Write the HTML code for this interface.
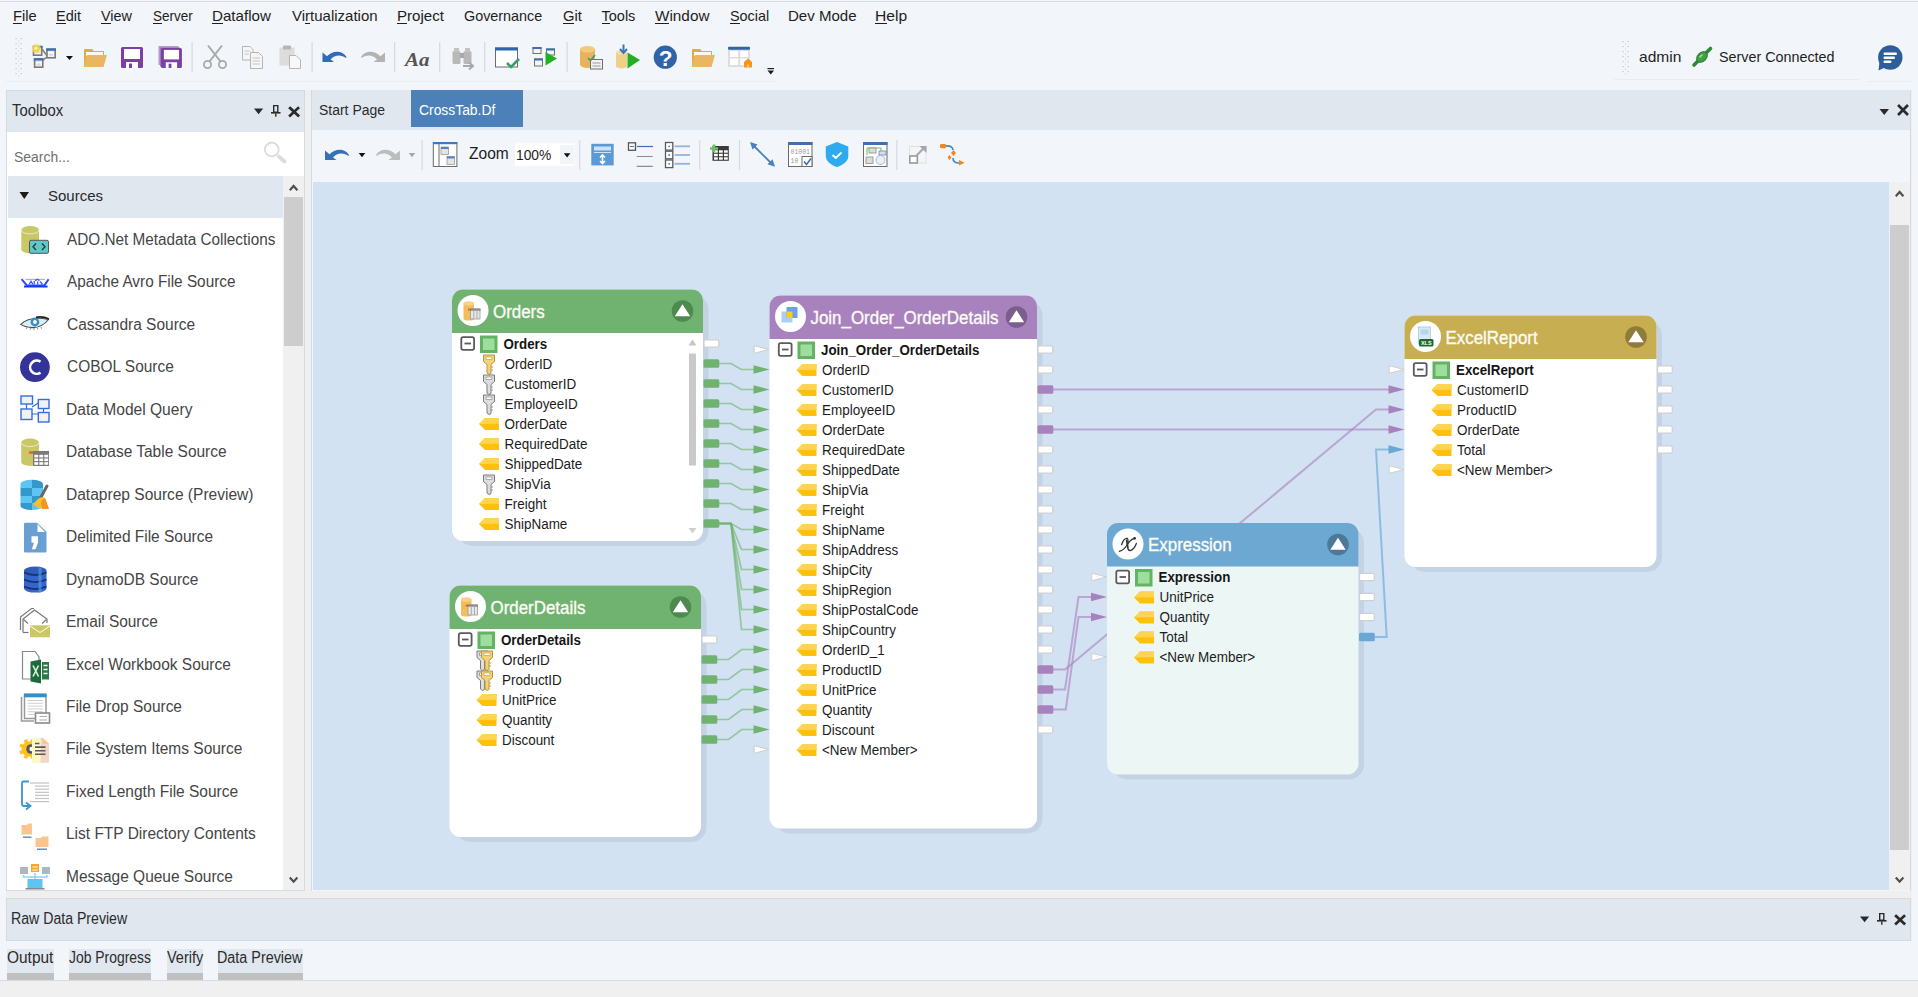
<!DOCTYPE html>
<html><head><meta charset="utf-8"><title>CrossTab.Df</title>
<style>
html,body{margin:0;padding:0}
body{width:1918px;height:997px;position:relative;overflow:hidden;background:#f2f5f9;font-family:"Liberation Sans",sans-serif}
.a{position:absolute}
.t{position:absolute;white-space:pre;transform-origin:0 0;font-family:"Liberation Sans",sans-serif}
svg.a{overflow:visible}
</style></head><body>
<div class="a" style="left:0px;top:1px;width:1918px;height:1px;background:#d9d9d9;"></div><span class="t" style="left:13.39px;top:8.72px;font-size:14.5px;line-height:14.5px;color:#1e1e1e;transform:scaleX(1.0135);">File</span><div class="a" style="left:13.4px;top:23px;width:9.0px;height:1px;background:#1e1e1e"></div><span class="t" style="left:56.00px;top:8.72px;font-size:14.5px;line-height:14.5px;color:#1e1e1e;">Edit</span><div class="a" style="left:56.0px;top:23px;width:9.7px;height:1px;background:#1e1e1e"></div><span class="t" style="left:101.00px;top:8.72px;font-size:14.5px;line-height:14.5px;color:#1e1e1e;transform:scaleX(0.9938);">View</span><div class="a" style="left:101.0px;top:23px;width:9.6px;height:1px;background:#1e1e1e"></div><span class="t" style="left:152.50px;top:8.72px;font-size:14.5px;line-height:14.5px;color:#1e1e1e;transform:scaleX(0.9329);">Server</span><div class="a" style="left:152.5px;top:23px;width:9.0px;height:1px;background:#1e1e1e"></div><span class="t" style="left:211.86px;top:8.72px;font-size:14.5px;line-height:14.5px;color:#1e1e1e;transform:scaleX(1.0439);">Dataflow</span><div class="a" style="left:211.9px;top:23px;width:10.9px;height:1px;background:#1e1e1e"></div><span class="t" style="left:291.50px;top:8.72px;font-size:14.5px;line-height:14.5px;color:#1e1e1e;transform:scaleX(1.0340);">Virtualization</span><div class="a" style="left:304.6px;top:23px;width:5.0px;height:1px;background:#1e1e1e"></div><span class="t" style="left:396.66px;top:8.72px;font-size:14.5px;line-height:14.5px;color:#1e1e1e;transform:scaleX(1.0408);">Project</span><div class="a" style="left:396.7px;top:23px;width:10.1px;height:1px;background:#1e1e1e"></div><span class="t" style="left:464.40px;top:8.72px;font-size:14.5px;line-height:14.5px;color:#1e1e1e;transform:scaleX(0.9908);">Governance</span><span class="t" style="left:562.90px;top:8.72px;font-size:14.5px;line-height:14.5px;color:#1e1e1e;transform:scaleX(1.0162);">Git</span><div class="a" style="left:562.9px;top:23px;width:11.5px;height:1px;background:#1e1e1e"></div><span class="t" style="left:601.50px;top:8.72px;font-size:14.5px;line-height:14.5px;color:#1e1e1e;">Tools</span><div class="a" style="left:601.5px;top:23px;width:8.8px;height:1px;background:#1e1e1e"></div><span class="t" style="left:655.00px;top:8.72px;font-size:14.5px;line-height:14.5px;color:#1e1e1e;transform:scaleX(1.0557);">Window</span><div class="a" style="left:655.0px;top:23px;width:14.4px;height:1px;background:#1e1e1e"></div><span class="t" style="left:730.00px;top:8.72px;font-size:14.5px;line-height:14.5px;color:#1e1e1e;transform:scaleX(0.9931);">Social</span><div class="a" style="left:730.0px;top:23px;width:9.6px;height:1px;background:#1e1e1e"></div><span class="t" style="left:787.96px;top:8.72px;font-size:14.5px;line-height:14.5px;color:#1e1e1e;transform:scaleX(1.0381);">Dev Mode</span><span class="t" style="left:875.42px;top:8.72px;font-size:14.5px;line-height:14.5px;color:#1e1e1e;transform:scaleX(1.0780);">Help</span><div class="a" style="left:875.4px;top:23px;width:11.3px;height:1px;background:#1e1e1e"></div><svg class="a" style="left:0px;top:35px" width="800" height="50" viewBox="0 35 800 50"><rect x="33.5" y="46.6" width="8.2" height="8.6" fill="#ececec" stroke="#7a7a7a" stroke-width="1.6"/><rect x="35.0" y="49.6" width="5.199999999999999" height="4.1" fill="#fff"/><rect x="35.5" y="51.1" width="4.199999999999999" height="2" fill="#d8d8d8"/><rect x="32.7" y="45.800000000000004" width="9.799999999999999" height="2.4" fill="#3f6fb3"/><rect x="47" y="49.2" width="8.2" height="8.6" fill="#ececec" stroke="#7a7a7a" stroke-width="1.6"/><rect x="48.5" y="52.2" width="5.199999999999999" height="4.1" fill="#fff"/><rect x="49" y="53.7" width="4.199999999999999" height="2" fill="#d8d8d8"/><rect x="46.2" y="48.400000000000006" width="9.799999999999999" height="2.4" fill="#3f6fb3"/><rect x="34.6" y="59" width="8.2" height="8.2" fill="#ececec" stroke="#7a7a7a" stroke-width="1.6"/><rect x="36.1" y="62" width="5.199999999999999" height="3.6999999999999993" fill="#fff"/><rect x="36.6" y="63.5" width="4.199999999999999" height="2" fill="#d8d8d8"/><rect x="33.800000000000004" y="58.2" width="9.799999999999999" height="2.4" fill="#3f6fb3"/><path d="M42 49 L46.8 55.5 M43.5 60 Q45 57.5 47 57.8" fill="none" stroke="#808080" stroke-width="1.6"/><circle cx="36.3" cy="48.6" r="4.8" fill="#f7e27a" opacity="0.6"/><circle cx="36.3" cy="48.6" r="3.4" fill="#f3d03c"/><circle cx="36" cy="48.3" r="1.6" fill="#fbeea8"/><path d="M66 56 L73 56 L69.5 60 Z" fill="#111"/><path d="M84 50 Q84 49 85 49 H92 L94 51 H104 V66 H84 Z" fill="#e2a94c"/><path d="M86 52 H103 V56 H86 Z" fill="#fff7e6"/><path d="M87 55 H107 L103.5 67 H83.5 Z" fill="#ebb660"/><rect x="121" y="47" width="22.0" height="21.0" rx="1.5" fill="#7b3fa6"/><rect x="124.0" y="49.0" width="16.0" height="10.0" fill="#fff"/><rect x="126.0" y="62.0" width="12.0" height="6.0" fill="#fff"/><rect x="129.0" y="63.5" width="3.0" height="4.5" fill="#7b3fa6"/><rect x="158.5" y="46" width="20" height="19" fill="#b39ccc"/><rect x="160" y="47.5" width="20" height="19" fill="#9a7bbd"/><rect x="161" y="48" width="20.9" height="19.95" rx="1.5" fill="#7b3fa6"/><rect x="163.85" y="49.9" width="15.2" height="9.5" fill="#fff"/><rect x="165.75" y="62.25" width="11.399999999999999" height="5.699999999999999" fill="#fff"/><rect x="168.6" y="63.675" width="2.8499999999999996" height="4.2749999999999995" fill="#7b3fa6"/><rect x="191.5" y="42" width="1.2" height="30" fill="#d5dae0"/><circle cx="207.5" cy="64.5" r="3.6" fill="none" stroke="#a9a9a9" stroke-width="1.8"/><circle cx="222.5" cy="64.5" r="3.6" fill="none" stroke="#a9a9a9" stroke-width="1.8"/><path d="M209.5 61.5 L222 45.5 M220.5 61.5 L208 45.5" stroke="#a9a9a9" stroke-width="2"/><path d="M242.5 46.5 H250 L253 49.5 V60 H242.5 Z" fill="#f6f6f6" stroke="#b5b5b5"/><path d="M250.5 52.5 H258.5 L262.5 56.5 V68.5 H250.5 Z" fill="#f6f6f6" stroke="#b5b5b5"/><path d="M252.5 58 H260 M252.5 61 H260 M252.5 64 H260 M244.5 51 H250 M244.5 54 H249" stroke="#c4c4c4" stroke-width="1"/><rect x="279.5" y="47.5" width="15" height="18" fill="#dcdcdc"/><rect x="283" y="45.5" width="8" height="4" rx="1" fill="#b5b5b5"/><path d="M289.5 55.5 H296 L300.5 60 V68.5 H289.5 Z" fill="#f8f8f8" stroke="#b5b5b5"/><rect x="311.5" y="42" width="1.2" height="30" fill="#d5dae0"/><path transform="translate(322.5,48)" d="M0 14 L0 4.5 L4.5 8.3 C9 3.5 19 1 24 9 L23.5 10 C19 6.5 12 6.5 8 11.5 L11.5 14 Z" fill="#2f6db5"/><path transform="translate(385,48) scale(-1,1)" d="M0 14 L0 4.5 L4.5 8.3 C9 3.5 19 1 24 9 L23.5 10 C19 6.5 12 6.5 8 11.5 L11.5 14 Z" fill="#b3b3b3"/><rect x="394.0" y="42" width="1.2" height="30" fill="#d5dae0"/><text x="405" y="66" font-family="Liberation Serif" font-style="italic" font-weight="700" font-size="19" fill="#555" textLength="24.5" lengthAdjust="spacingAndGlyphs">Aa</text><rect x="439.1" y="42" width="1.2" height="30" fill="#d5dae0"/><rect x="452.5" y="51" width="8" height="13" rx="1.5" fill="#b8b8b8"/><rect x="463.5" y="51" width="8" height="13" rx="1.5" fill="#b8b8b8"/><rect x="454" y="48" width="5" height="4" fill="#c2c2c2"/><rect x="465" y="48" width="5" height="4" fill="#c2c2c2"/><rect x="460" y="53" width="4" height="5" fill="#a8a8a8"/><path d="M463 66 H472.5 M469 62.5 L473 66 L469 69.5" fill="none" stroke="#a8a8a8" stroke-width="2"/><rect x="484.1" y="42" width="1.2" height="30" fill="#d5dae0"/><rect x="495.5" y="48" width="22" height="19" fill="#fff" stroke="#6b6b6b" stroke-width="1"/><rect x="495" y="47.5" width="23" height="3" fill="#2f64a8"/><path d="M507 63 L511 67 L519 59" fill="none" stroke="#3a9a6e" stroke-width="2.6"/><rect x="533.0" y="47.5" width="8" height="6" fill="#f4f4f4" stroke="#707070" stroke-width="1"/><rect x="532.5" y="47" width="9" height="2" fill="#3d6eb5"/><rect x="546.5" y="49.0" width="8" height="6" fill="#f4f4f4" stroke="#707070" stroke-width="1"/><rect x="546" y="48.5" width="9" height="2" fill="#3d6eb5"/><rect x="534.5" y="59.0" width="8" height="7" fill="#f4f4f4" stroke="#707070" stroke-width="1"/><rect x="534" y="58.5" width="9" height="2" fill="#3d6eb5"/><path d="M545.5 52 L557 58.5 L545.5 65.5 Z" fill="#22b022"/><rect x="566.5" y="42" width="1.2" height="30" fill="#d5dae0"/><path d="M580 49.3 V64.7 A7.5 3.3 0 0 0 595 64.7 V49.3 Z" fill="#e8b35e"/><ellipse cx="587.5" cy="49.3" rx="7.5" ry="3.3" fill="#f3c97a"/><rect x="590.5" y="59.5" width="12" height="9.5" fill="#f2f2f2" stroke="#6f6f6f"/><path d="M592.5 63 H600.5 M592.5 66 H600.5" stroke="#9a9a9a"/><path d="M588 58 L590.5 60.5 L595 55" fill="none" stroke="#3a9a6e" stroke-width="1.6"/><path d="M616 52.42 V66.08 A5.5 2.42 0 0 0 627 66.08 V52.42 Z" fill="#f0cf86"/><ellipse cx="621.5" cy="52.42" rx="5.5" ry="2.42" fill="#f7dca0"/><path d="M623.5 44.5 V52" stroke="#3d74b8" stroke-width="2"/><path d="M620 49 L623.5 53 L627 49" fill="none" stroke="#3d74b8" stroke-width="2"/><path d="M627.5 52.5 L640 60 L627.5 68.5 Z" fill="#22b022"/><circle cx="665.3" cy="57.2" r="11.6" fill="#2f64a8"/><text x="665.6" y="66.3" text-anchor="middle" font-family="Liberation Sans" font-weight="700" font-size="22.5" fill="#fff">?</text><path d="M692 50 Q692 49 693 49 H700 L702 51 H712 V66 H692 Z" fill="#e2a94c"/><path d="M694 52 H711 V56 H694 Z" fill="#fff7e6"/><path d="M695 55 H715 L711.5 67 H691.5 Z" fill="#ebb660"/><rect x="728" y="47" width="22" height="20" fill="#dedede"/><rect x="728" y="46.8" width="22" height="3" rx="1" fill="#2f64a8"/><rect x="730" y="51" width="8.2" height="6" fill="#fff"/><rect x="740.2" y="51" width="8" height="6" fill="#fff"/><rect x="730" y="58.5" width="8.2" height="6.5" fill="#fff"/><rect x="740.2" y="58.5" width="8" height="6.5" fill="#fff"/><path d="M744 62 L748 58.5 L752 62 V67.5 H744 Z" fill="#f7941d"/><rect x="747" y="64.5" width="2" height="3" fill="#fbc27a"/><rect x="767.5" y="68" width="6.5" height="1.2" fill="#1a1a1a"/><path d="M767.5 70.5 H774 L770.75 74.5 Z" fill="#1a1a1a"/></svg><div class="a" style="left:6px;top:81px;width:770px;height:1px;background:#eaecee;"></div><div class="a" style="left:1614px;top:79px;width:245px;height:1px;background:#eaecee;"></div><div class="a" style="left:1868px;top:81px;width:44px;height:1px;background:#eaecee;"></div><svg class="a" style="left:14px;top:37px" width="9" height="39" viewBox="14 37 9 39"><rect x="15.5" y="38" width="1.2" height="1.2" fill="#c4c8cc"/><rect x="20.5" y="38" width="1.2" height="1.2" fill="#c4c8cc"/><rect x="18" y="40.5" width="1.2" height="1.2" fill="#d4d8dc"/><rect x="15.5" y="43" width="1.2" height="1.2" fill="#c4c8cc"/><rect x="20.5" y="43" width="1.2" height="1.2" fill="#c4c8cc"/><rect x="18" y="45.5" width="1.2" height="1.2" fill="#d4d8dc"/><rect x="15.5" y="48" width="1.2" height="1.2" fill="#c4c8cc"/><rect x="20.5" y="48" width="1.2" height="1.2" fill="#c4c8cc"/><rect x="18" y="50.5" width="1.2" height="1.2" fill="#d4d8dc"/><rect x="15.5" y="53" width="1.2" height="1.2" fill="#c4c8cc"/><rect x="20.5" y="53" width="1.2" height="1.2" fill="#c4c8cc"/><rect x="18" y="55.5" width="1.2" height="1.2" fill="#d4d8dc"/><rect x="15.5" y="58" width="1.2" height="1.2" fill="#c4c8cc"/><rect x="20.5" y="58" width="1.2" height="1.2" fill="#c4c8cc"/><rect x="18" y="60.5" width="1.2" height="1.2" fill="#d4d8dc"/><rect x="15.5" y="63" width="1.2" height="1.2" fill="#c4c8cc"/><rect x="20.5" y="63" width="1.2" height="1.2" fill="#c4c8cc"/><rect x="18" y="65.5" width="1.2" height="1.2" fill="#d4d8dc"/><rect x="15.5" y="68" width="1.2" height="1.2" fill="#c4c8cc"/><rect x="20.5" y="68" width="1.2" height="1.2" fill="#c4c8cc"/><rect x="18" y="70.5" width="1.2" height="1.2" fill="#d4d8dc"/><rect x="15.5" y="73" width="1.2" height="1.2" fill="#c4c8cc"/><rect x="20.5" y="73" width="1.2" height="1.2" fill="#c4c8cc"/><rect x="18" y="75.5" width="1.2" height="1.2" fill="#d4d8dc"/></svg><svg class="a" style="left:1621px;top:40px" width="9" height="34" viewBox="1621 40 9 34"><rect x="1622.5" y="41" width="1.2" height="1.2" fill="#c4c8cc"/><rect x="1627.5" y="41" width="1.2" height="1.2" fill="#c4c8cc"/><rect x="1625" y="43.5" width="1.2" height="1.2" fill="#d4d8dc"/><rect x="1622.5" y="46" width="1.2" height="1.2" fill="#c4c8cc"/><rect x="1627.5" y="46" width="1.2" height="1.2" fill="#c4c8cc"/><rect x="1625" y="48.5" width="1.2" height="1.2" fill="#d4d8dc"/><rect x="1622.5" y="51" width="1.2" height="1.2" fill="#c4c8cc"/><rect x="1627.5" y="51" width="1.2" height="1.2" fill="#c4c8cc"/><rect x="1625" y="53.5" width="1.2" height="1.2" fill="#d4d8dc"/><rect x="1622.5" y="56" width="1.2" height="1.2" fill="#c4c8cc"/><rect x="1627.5" y="56" width="1.2" height="1.2" fill="#c4c8cc"/><rect x="1625" y="58.5" width="1.2" height="1.2" fill="#d4d8dc"/><rect x="1622.5" y="61" width="1.2" height="1.2" fill="#c4c8cc"/><rect x="1627.5" y="61" width="1.2" height="1.2" fill="#c4c8cc"/><rect x="1625" y="63.5" width="1.2" height="1.2" fill="#d4d8dc"/><rect x="1622.5" y="66" width="1.2" height="1.2" fill="#c4c8cc"/><rect x="1627.5" y="66" width="1.2" height="1.2" fill="#c4c8cc"/><rect x="1625" y="68.5" width="1.2" height="1.2" fill="#d4d8dc"/><rect x="1622.5" y="71" width="1.2" height="1.2" fill="#c4c8cc"/><rect x="1627.5" y="71" width="1.2" height="1.2" fill="#c4c8cc"/><rect x="1625" y="73.5" width="1.2" height="1.2" fill="#d4d8dc"/></svg><span class="t" style="left:1639.00px;top:49.10px;font-size:15px;line-height:15px;color:#1e1e1e;transform:scaleX(1.0367);">admin</span><svg class="a" style="left:1690px;top:45px" width="25" height="25" viewBox="1690 45 25 25"><path d="M1694 65 L1699.5 59.5" stroke="#2e8b34" stroke-width="3.6" stroke-linecap="round"/><path d="M1704.5 54.5 L1710.5 48.5" stroke="#2e8b34" stroke-width="3.6" stroke-linecap="round"/><ellipse cx="1702" cy="57" rx="6.2" ry="4.3" transform="rotate(-45 1702 57)" fill="#43a047" stroke="#2a7a2e" stroke-width="1"/><path d="M1699.5 57.5 L1702.5 54.5" stroke="#9be09b" stroke-width="1.5"/></svg><span class="t" style="left:1719.40px;top:49.10px;font-size:15px;line-height:15px;color:#1e1e1e;transform:scaleX(0.9556);">Server Connected</span><svg class="a" style="left:1877px;top:45px" width="28" height="28" viewBox="1877 45 28 28"><circle cx="1890.3" cy="57.5" r="12.2" fill="#2d5e99"/><path d="M1879.5 62 L1878.5 70.5 L1886 67" fill="#2d5e99"/><rect x="1883.5" y="52.5" width="13.5" height="2.4" rx="1.2" fill="#fff"/><rect x="1883.5" y="56.5" width="11.5" height="2.4" rx="1.2" fill="#fff"/><rect x="1883.5" y="60.5" width="8" height="2.4" rx="1.2" fill="#fff"/></svg><div class="a" style="left:6px;top:90px;width:1906px;height:851px;background:#efefef;"></div><div class="a" style="left:6px;top:90px;width:299px;height:801px;background:#ffffff;box-sizing:border-box;border:1px solid #d3dae2"></div><div class="a" style="left:7px;top:91px;width:297px;height:41px;background:#e0e7ef;"></div><span class="t" style="left:11.70px;top:102.82px;font-size:15.8px;line-height:15.8px;color:#2b2b2b;transform:scaleX(0.9404);">Toolbox</span><svg class="a" style="left:252px;top:102.5px" width="52" height="16" viewBox="252 102.5 52 16"><path d="M254 108.0 L263.2 108.0 L258.6 113.8 Z" fill="#2a2a2a"/><path d="M273 104.5 H278.5 V112.0 H273 Z M274.4 105.8 V111.0 H277.1 V105.8 Z" fill="#2a2a2a" fill-rule="evenodd"/><rect x="271" y="111.5" width="9.5" height="1.6" fill="#2a2a2a"/><rect x="275.1" y="113.0" width="1.4" height="3.2" fill="#2a2a2a"/><path d="M290.1 107.6 L298.1 115.1 M298.1 107.6 L290.1 115.1" stroke="#2a2a2a" stroke-width="2.7" stroke-linecap="square"/></svg><span class="t" style="left:13.70px;top:150.17px;font-size:14.8px;line-height:14.8px;color:#707070;transform:scaleX(0.9414);">Search...</span><svg class="a" style="left:262px;top:141px" width="26" height="26" viewBox="262 141 26 26"><circle cx="271.8" cy="149.5" r="6.9" fill="none" stroke="#dadada" stroke-width="1.7"/><path d="M268.2 146.8 Q269 145.3 270.8 144.9" fill="none" stroke="#e8e8e8" stroke-width="1"/><path d="M278.8 156.5 L284.5 161.5" stroke="#dcdcdc" stroke-width="3.8" stroke-linecap="round"/></svg><div class="a" style="left:8px;top:176px;width:275px;height:42px;background:#e0e7ef;"></div><svg class="a" style="left:19px;top:191px;" width="11" height="9" viewBox="0 0 11 9"><path d="M0.5 1 L10 1 L5.25 8 Z" fill="#1a1a1a"/></svg><span class="t" style="left:48.20px;top:188.16px;font-size:15.4px;line-height:15.4px;color:#2a2a2a;transform:scaleX(0.9760);">Sources</span><div class="a" style="left:283px;top:176px;width:21px;height:714px;background:#f0f0f0;"></div><div class="a" style="left:284px;top:197px;width:18.5px;height:148.5px;background:#cdcdcd;"></div><svg class="a" style="left:288px;top:183px" width="12" height="10" viewBox="288 183 12 10"><path d="M289.8 190.2 L293.6 186 L297.4 190.2" fill="none" stroke="#4f4f4f" stroke-width="2.2"/></svg><svg class="a" style="left:288px;top:875px" width="12" height="10" viewBox="288 875 12 10"><path d="M289.8 877.5 L293.6 881.7 L297.4 877.5" fill="none" stroke="#4f4f4f" stroke-width="2.2"/></svg><span class="t" style="left:67.30px;top:231.85px;font-size:16px;line-height:16px;color:#454545;transform:scaleX(0.9561);">ADO.Net Metadata Collections</span><span class="t" style="left:67.30px;top:274.32px;font-size:16px;line-height:16px;color:#454545;transform:scaleX(0.9582);">Apache Avro File Source</span><span class="t" style="left:67.30px;top:316.79px;font-size:16px;line-height:16px;color:#454545;transform:scaleX(0.9669);">Cassandra Source</span><span class="t" style="left:67.30px;top:359.26px;font-size:16px;line-height:16px;color:#454545;transform:scaleX(0.9662);">COBOL Source</span><span class="t" style="left:66.33px;top:401.73px;font-size:16px;line-height:16px;color:#454545;transform:scaleX(0.9738);">Data Model Query</span><span class="t" style="left:66.33px;top:444.20px;font-size:16px;line-height:16px;color:#454545;transform:scaleX(0.9672);">Database Table Source</span><span class="t" style="left:66.33px;top:486.67px;font-size:16px;line-height:16px;color:#454545;transform:scaleX(0.9717);">Dataprep Source (Preview)</span><span class="t" style="left:66.33px;top:529.14px;font-size:16px;line-height:16px;color:#454545;transform:scaleX(0.9669);">Delimited File Source</span><span class="t" style="left:66.33px;top:571.61px;font-size:16px;line-height:16px;color:#454545;transform:scaleX(0.9665);">DynamoDB Source</span><span class="t" style="left:66.34px;top:614.08px;font-size:16px;line-height:16px;color:#454545;transform:scaleX(0.9648);">Email Source</span><span class="t" style="left:66.33px;top:656.55px;font-size:16px;line-height:16px;color:#454545;transform:scaleX(0.9673);">Excel Workbook Source</span><span class="t" style="left:66.33px;top:699.02px;font-size:16px;line-height:16px;color:#454545;transform:scaleX(0.9660);">File Drop Source</span><span class="t" style="left:66.33px;top:741.49px;font-size:16px;line-height:16px;color:#454545;transform:scaleX(0.9675);">File System Items Source</span><span class="t" style="left:66.33px;top:783.96px;font-size:16px;line-height:16px;color:#454545;transform:scaleX(0.9674);">Fixed Length File Source</span><span class="t" style="left:66.33px;top:826.43px;font-size:16px;line-height:16px;color:#454545;transform:scaleX(0.9673);">List FTP Directory Contents</span><span class="t" style="left:66.33px;top:868.90px;font-size:16px;line-height:16px;color:#454545;transform:scaleX(0.9673);">Message Queue Source</span><svg class="a" style="left:14px;top:220px" width="40" height="672" viewBox="14 220 40 672"><path d="M21.3 229.894 V249.606 A8.85 3.8939999999999997 0 0 0 39.0 249.606 V229.894 Z" fill="#c9c866"/><ellipse cx="30.15" cy="229.894" rx="8.85" ry="3.8939999999999997" fill="#c9c866"/><path d="M21.3 230 A8.85 3.9 0 0 0 39 230" fill="none" stroke="#f6f0d8" stroke-width="0.8"/><rect x="29.5" y="240.3" width="19" height="13" rx="1.5" fill="#5cc8c8" stroke="#555" stroke-width="1"/><path d="M36 243.5 L33 246.8 L36 250 M42 243.5 L45 246.8 L42 250" fill="none" stroke="#333" stroke-width="1.3"/><path d="M21.6 279.2 L26.8 285.4 H44.4 L48.6 279.2" fill="none" stroke="#2d4dff" stroke-width="2"/><rect x="24" y="285.6" width="23.6" height="1.9" fill="#1537ff"/><rect x="25.5" y="278.8" width="19.5" height="1.3" fill="#b2a8ff"/><path d="M29 284.5 L31 281.3 L33 284.5 M34.2 284.5 V281 M35 280.6 L37.5 279.2 L39.5 280.6 M37.7 284.5 V281.5 M40.2 281.5 L42.5 284.5" fill="none" stroke="#3b5cff" stroke-width="1.3"/><path d="M20.8 324.4 Q30 315.5 48.5 319.5 Q42 327.8 32 327.6 Q24.5 327 20.8 324.4 Z" fill="#d9eef9" stroke="#4a4a4a" stroke-width="1.1"/><circle cx="34.9" cy="322" r="4.4" fill="#3a8fc0"/><circle cx="34.9" cy="322" r="1.9" fill="#fff"/><path d="M36 317.3 Q43 316 48.8 319" fill="none" stroke="#222" stroke-width="1.8"/><path d="M27 327 L26.5 329 M30.5 327.8 L30.3 329.8 M34 328 V330 M37.5 327.8 L37.8 329.6 M41 327 L41.6 328.8" stroke="#777" stroke-width="0.8"/><circle cx="34.9" cy="367.2" r="14.9" fill="#33339a"/><path d="M40.5 361.8 A6.6 6.6 0 1 0 40.5 372.6" fill="none" stroke="#fff" stroke-width="2.6"/><rect x="21" y="396" width="11.5" height="8" fill="#f2f2f2" stroke="#2f6fe0" stroke-width="1.4"/><rect x="38.3" y="399.5" width="10.7" height="9" fill="#f2f2f2" stroke="#2f6fe0" stroke-width="1.4"/><rect x="21" y="409" width="11" height="10.5" fill="#f2f2f2" stroke="#2f6fe0" stroke-width="1.4"/><rect x="38.3" y="412.5" width="10.7" height="9.5" fill="#f2f2f2" stroke="#2f6fe0" stroke-width="1.4"/><path d="M26.5 404 V409 M32 414 H38.3 M43.5 408.5 V412.5 M32 407 L38.3 403" stroke="#2f6fe0" stroke-width="1.2"/><path d="M21.2 442.494 V462.106 A8.85 3.8939999999999997 0 0 0 38.9 462.106 V442.494 Z" fill="#c9c866"/><ellipse cx="30.049999999999997" cy="442.494" rx="8.85" ry="3.8939999999999997" fill="#c9c866"/><path d="M21.2 442.6 A8.85 3.9 0 0 0 38.9 442.6" fill="none" stroke="#f6f0d8" stroke-width="0.8"/><rect x="29" y="451.3" width="7" height="2.4" fill="#e0642a"/><rect x="33" y="451" width="16" height="15" fill="#7a7a7a"/><rect x="34.3" y="454.8" width="3.9" height="2.6" fill="#fff"/><rect x="39.3" y="454.8" width="3.9" height="2.6" fill="#fff"/><rect x="44.3" y="454.8" width="3.9" height="2.6" fill="#fff"/><rect x="34.3" y="458.5" width="3.9" height="2.6" fill="#fff"/><rect x="39.3" y="458.5" width="3.9" height="2.6" fill="#fff"/><rect x="44.3" y="458.5" width="3.9" height="2.6" fill="#fff"/><rect x="34.3" y="462.2" width="3.9" height="2.6" fill="#fff"/><rect x="39.3" y="462.2" width="3.9" height="2.6" fill="#fff"/><rect x="44.3" y="462.2" width="3.9" height="2.6" fill="#fff"/><clipPath id="dpc"><path d="M20.5 484 A11.25 4.2 0 0 1 43 484 V506 A11.25 4 0 0 1 20.5 506 Z"/></clipPath><g clip-path="url(#dpc)"><path d="M20 479 H32 V488 H20 Z" fill="#5ec4f2"/><path d="M32 479 H44 V488 H32 Z" fill="#3399cc"/><path d="M20 488 Q32 491 44 488" fill="none" stroke="#5ec4f2" stroke-width="0.01"/><path d="M20 488 H32 V496 H20 Z" fill="#3399cc"/><path d="M32 488 H44 V496 H32 Z" fill="#5ec4f2"/><path d="M20 496 Q32 499 44 496" fill="none" stroke="#3399cc" stroke-width="0.01"/><path d="M20 496 H32 V503 H20 Z" fill="#5ec4f2"/><path d="M32 496 H44 V503 H32 Z" fill="#3399cc"/><path d="M20 503 Q32 506 44 503" fill="none" stroke="#5ec4f2" stroke-width="0.01"/><path d="M20 503 H32 V511 H20 Z" fill="#3399cc"/><path d="M32 503 H44 V511 H32 Z" fill="#5ec4f2"/><path d="M20 511 Q32 514 44 511" fill="none" stroke="#3399cc" stroke-width="0.01"/></g><path d="M41 497 L47 486" stroke="#666" stroke-width="3" stroke-linecap="round"/><path d="M37 500 Q42 495 45 498 L48.5 509 L38 508 L33 504 Z" fill="#fbbf24"/><path d="M41 502 Q44 497 45.5 499 L49 509 L42 509 Z" fill="#f7941d"/><path d="M24 523.8 Q24 522.8 25 522.8 H37 L46.5 531.8 V551.3 Q46.5 552.5 45.3 552.5 H25 Q24 552.5 24 551.3 Z" fill="#6a9fd4"/><path d="M37.5 524.3 V532.0999999999999 H45 Z" fill="#fff"/><path d="M31.5 536.3 H38 V542.8 L35.5 549.3 H31.8 L34 542.8 H31.5 Z" fill="#fff"/><path d="M24 570.6 V588.6 A11.25 4 0 0 0 46.5 588.6 V570.6 Z" fill="#3366cc"/><ellipse cx="35.25" cy="570.6" rx="11.25" ry="4" fill="#2e5cb8"/><path d="M24 572.6 Q35 577.6 46.5 572.6 M24 579.6 Q35 584.6 46.5 579.6 M24 586.6 Q35 591.6 46.5 586.6" fill="none" stroke="#1b2f6e" stroke-width="1.6"/><path d="M40 567.6 V592.6" stroke="#5fa0e6" stroke-width="3" opacity="0.6"/><path d="M20.5 630 V617 L31.5 608.5 H34" fill="none" stroke="#777" stroke-width="1.2"/><path d="M23 632.5 V619 L34.5 610 L47 619 V623" fill="none" stroke="#777" stroke-width="1.2"/><path d="M23 632.5 H28.5" stroke="#777" stroke-width="1.2"/><path d="M23.5 619.5 L28 623.5 M46.5 619.5 L42 623.5" stroke="#777" stroke-width="1.2"/><rect x="30" y="625.3" width="20" height="12" fill="#c9c866"/><path d="M30 626 L40 632.5 L50 626" fill="none" stroke="#fff" stroke-width="1"/><path d="M22.5 651.5 H35 L39 657.0 V679.0 H22.5 Z" fill="#fff" stroke="#888" stroke-width="1.2"/><path d="M30.5 661.5 L41 659.5 V683.5 L30.5 681.5 Z" fill="#1e6b3a"/><rect x="42" y="662.0" width="7" height="17.5" fill="#2a7a44"/><path d="M43.5 665.5 H47.5 M43.5 669.5 H47.5 M43.5 673.5 H47.5" stroke="#fff" stroke-width="1.4"/><path d="M33 665.5 L38.5 676.5 M38.5 665.5 L33 676.5" stroke="#dff0e4" stroke-width="1.6"/><path d="M21.5 697.0 V721.0 H34" fill="none" stroke="#9a9a9a" stroke-width="1.5"/><rect x="24.5" y="694.5" width="21.5" height="24" fill="#fff" stroke="#9a9a9a" stroke-width="1.5"/><rect x="24" y="693.5" width="22.5" height="3.8" fill="#2f8fd0"/><path d="M27.5 700.5 H43" stroke="#d0d0d0" stroke-width="1"/><path d="M27.5 703.3 H43" stroke="#d0d0d0" stroke-width="1"/><path d="M27.5 706.1 H43" stroke="#d0d0d0" stroke-width="1"/><path d="M27.5 708.9 H43" stroke="#d0d0d0" stroke-width="1"/><path d="M27.5 711.7 H43" stroke="#d0d0d0" stroke-width="1"/><path d="M27.5 714.5 H43" stroke="#d0d0d0" stroke-width="1"/><rect x="35.5" y="713.0" width="14" height="10" fill="#fff" stroke="#8a8a8a" stroke-width="1.6"/><path d="M39.5 716.5 H47 M39.5 720.0 H47" stroke="#aaa" stroke-width="1"/><circle cx="29.2" cy="749.0" r="7.6" fill="#fdc21e"/><rect x="34.975812166592554" y="750.3380041453938" width="3.6" height="3.6" fill="#fdc21e" transform="rotate(22.5 36.77581216659255 752.1380041453938)"/><rect x="30.53800414539373" y="754.7758121665926" width="3.6" height="3.6" fill="#fdc21e" transform="rotate(67.5 32.33800414539373 756.5758121665925)"/><rect x="24.261995854606262" y="754.7758121665926" width="3.6" height="3.6" fill="#fdc21e" transform="rotate(112.5 26.061995854606263 756.5758121665925)"/><rect x="19.824187833407446" y="750.3380041453938" width="3.6" height="3.6" fill="#fdc21e" transform="rotate(157.5 21.624187833407447 752.1380041453938)"/><rect x="19.824187833407446" y="744.0619958546063" width="3.6" height="3.6" fill="#fdc21e" transform="rotate(202.5 21.624187833407447 745.8619958546062)"/><rect x="24.261995854606266" y="739.6241878334075" width="3.6" height="3.6" fill="#fdc21e" transform="rotate(247.5 26.061995854606266 741.4241878334075)"/><rect x="30.53800414539374" y="739.6241878334075" width="3.6" height="3.6" fill="#fdc21e" transform="rotate(292.5 32.33800414539374 741.4241878334075)"/><rect x="34.975812166592554" y="744.0619958546063" width="3.6" height="3.6" fill="#fdc21e" transform="rotate(337.5 36.77581216659255 745.8619958546062)"/><circle cx="31" cy="749.0" r="4.8" fill="#585858"/><circle cx="31.6" cy="749.0" r="2.2" fill="#fff"/><rect x="32" y="737.8" width="8.5" height="25" fill="#fdf8c4"/><path d="M40.5 737.8 H42.5 L49 743.7 V762.8 H40.5 Z" fill="#efd7c8"/><path d="M42.5 737.8 L49 743.7 H42.5 Z" fill="#ffc28a"/><path d="M35 743.5 H39.5 M35 747.1 H45.5 M35 750.7 H45.5 M35 754.3 H45.5" stroke="#5a5a5a" stroke-width="1.6"/><path d="M29 781.5 H23.5 Q22 781.5 22 783 V804 Q22 806 24 806 H29" fill="none" stroke="#3a95d0" stroke-width="1.8"/><path d="M26 802.5 L30.5 806 L26 809.5" fill="none" stroke="#3a95d0" stroke-width="1.8"/><path d="M30 783.0 H49" stroke="#c2c2c2" stroke-width="1.2"/><path d="M35 786.1 H49" stroke="#c2c2c2" stroke-width="1.2"/><path d="M35 789.2 H49" stroke="#c2c2c2" stroke-width="1.2"/><path d="M35 792.3 H49" stroke="#c2c2c2" stroke-width="1.2"/><path d="M35 795.4 H49" stroke="#c2c2c2" stroke-width="1.2"/><path d="M35 798.5 H49" stroke="#c2c2c2" stroke-width="1.2"/><path d="M30 801.6 H49" stroke="#c2c2c2" stroke-width="1.2"/><path d="M21.5 825 H27 L28 823.5 H32 V834.5 H21.5 Z" fill="#fcc58f"/><rect x="23" y="836.5" width="8.5" height="1.4" fill="#3a95d0"/><path d="M35.5 838 H41 L42 836.5 H48.5 V847 H35.5 Z" fill="#fcc58f"/><rect x="37" y="848.5" width="10" height="1.4" fill="#3a95d0"/><rect x="20" y="867" width="8" height="7" fill="#aab7c4"/><rect x="42" y="867" width="8" height="7" fill="#aab7c4"/><rect x="31" y="864" width="8" height="8" fill="#f9a825"/><path d="M32.5 867 H37.5 M32.5 870 H37.5" stroke="#fff" stroke-width="1"/><path d="M23.5 875 V877 H47 V875 M35 873 V879" fill="none" stroke="#8fd0f5" stroke-width="1.5"/><rect x="27.5" y="879" width="15" height="9" fill="#5ec4f2"/><rect x="25.5" y="888" width="19" height="1.5" fill="#888"/></svg><div class="a" style="left:311px;top:90px;width:601px;height:801px;background:#f2f5f9;"></div><div class="a" style="left:311px;top:90px;width:1600px;height:801px;background:#f2f5f9;box-sizing:border-box;border-left:1px solid #d3dae2;border-right:1px solid #d3dae2"></div><div class="a" style="left:312px;top:90px;width:1598px;height:39.5px;background:#e0e7ef;"></div><span class="t" style="left:319.40px;top:102.43px;font-size:15.2px;line-height:15.2px;color:#2b2b2b;transform:scaleX(0.9199);">Start Page</span><div class="a" style="left:411px;top:90px;width:111.5px;height:37px;background:#4b80b9;"></div><span class="t" style="left:419.00px;top:102.43px;font-size:15.2px;line-height:15.2px;color:#ffffff;transform:scaleX(0.9131);">CrossTab.Df</span><svg class="a" style="left:1879px;top:108px;" width="11" height="8" viewBox="0 0 11 8"><path d="M0.5 1 L10 1 L5.25 7 Z" fill="#2a2a2a"/></svg><svg class="a" style="left:1896px;top:103px" width="14" height="14" viewBox="1896 103 14 14"><path d="M1899 106 L1907 114 M1907 106 L1899 114" stroke="#2a2a2a" stroke-width="2.7" stroke-linecap="square"/></svg><svg class="a" style="left:312px;top:130px" width="700" height="52" viewBox="312 130 700 52"><path transform="translate(325,146)" d="M0 14 L0 4.5 L4.5 8.3 C9 3.5 19 1 24 9 L23.5 10 C19 6.5 12 6.5 8 11.5 L11.5 14 Z" fill="#3671b8"/><path d="M358.7 153 L365.3 153 L362 157.3 Z" fill="#111"/><path transform="translate(400,146) scale(-1,1)" d="M0 14 L0 4.5 L4.5 8.3 C9 3.5 19 1 24 9 L23.5 10 C19 6.5 12 6.5 8 11.5 L11.5 14 Z" fill="#bdbdbd"/><path d="M408.7 153 L415.3 153 L412 157.3 Z" fill="#a8a8a8"/><rect x="421.5" y="140" width="1.2" height="30" fill="#d5dae0"/><rect x="433.3" y="142.5" width="23.6" height="24" fill="#fff" stroke="#6a6a6a" stroke-width="1"/><rect x="433" y="142" width="24.3" height="2.2" fill="#3f79c0"/><path d="M439 143 V167" stroke="#6a6a6a"/><rect x="441" y="147" width="7.5" height="7.5" fill="#e4e4e4" stroke="#9a9a9a" stroke-width="0.8"/><rect x="441" y="147" width="7.5" height="2" fill="#4f86c6"/><rect x="447" y="156.5" width="7.5" height="8" fill="#e4e4e4" stroke="#9a9a9a" stroke-width="0.8"/><rect x="447" y="156.5" width="7.5" height="2" fill="#4f86c6"/><rect x="515" y="143.3" width="59.6" height="22.5" fill="#ffffff"/><rect x="560" y="145" width="14" height="19" fill="#f2f5f8"/><path d="M563.8 153.2 L570.4 153.2 L567.1 157.5 Z" fill="#111"/><rect x="579.1" y="140" width="1.2" height="30" fill="#d5dae0"/><rect x="591.3" y="143.8" width="22.4" height="21.6" fill="#5b9bd5"/><rect x="594" y="146.5" width="17" height="4" fill="#cfe2f5"/><path d="M594 152.5 H611" stroke="#cfe2f5" stroke-width="1"/><path d="M602.5 155 V163.5 M600 157.5 L602.5 155 L605 157.5 M600 161 L602.5 163.5 L605 161" fill="none" stroke="#fff" stroke-width="1.6"/><rect x="628.5" y="142.8" width="7" height="7.5" fill="#fff" stroke="#555" stroke-width="1.3"/><path d="M630 146.5 H634" stroke="#3f79c0" stroke-width="1"/><path d="M637 146.5 H653" stroke="#3f6fb0" stroke-width="1.2"/><path d="M636.7 156.5 H652.7 M636.7 166.4 H652.7" stroke="#8c8c8c" stroke-width="1.1"/><rect x="665.5" y="142.5" width="7.3" height="7.6" fill="#fff" stroke="#5a5a5a" stroke-width="1.3"/><circle cx="669.1" cy="146.3" r="0.9" fill="#3f79c0"/><path d="M674.6 146.3 H690" stroke="#93b3d9" stroke-width="1.8"/><rect x="665.5" y="151.2" width="7.3" height="7.6" fill="#fff" stroke="#5a5a5a" stroke-width="1.3"/><circle cx="669.1" cy="155.0" r="0.9" fill="#3f79c0"/><path d="M674.6 155.0 H690" stroke="#93b3d9" stroke-width="1.8"/><rect x="665.5" y="160" width="7.3" height="7.6" fill="#fff" stroke="#5a5a5a" stroke-width="1.3"/><circle cx="669.1" cy="163.8" r="0.9" fill="#3f79c0"/><path d="M674.6 163.8 H690" stroke="#93b3d9" stroke-width="1.8"/><rect x="699.1" y="140" width="1.2" height="30" fill="#d5dae0"/><rect x="712.5" y="146" width="16.3" height="14.8" fill="#3a3a3a"/><rect x="714" y="150.3" width="3.8" height="2.4" fill="#fff"/><rect x="719" y="150.3" width="3.8" height="2.4" fill="#fff"/><rect x="724" y="150.3" width="3.8" height="2.4" fill="#fff"/><rect x="714" y="153.8" width="3.8" height="2.4" fill="#fff"/><rect x="719" y="153.8" width="3.8" height="2.4" fill="#fff"/><rect x="724" y="153.8" width="3.8" height="2.4" fill="#fff"/><rect x="714" y="157.3" width="3.8" height="2.4" fill="#fff"/><rect x="719" y="157.3" width="3.8" height="2.4" fill="#fff"/><rect x="724" y="157.3" width="3.8" height="2.4" fill="#fff"/><path d="M714 144.5 V152.5 M710 148.5 H718" stroke="#6cc06c" stroke-width="2.6"/><rect x="738.9" y="140" width="1.2" height="30" fill="#d5dae0"/><path d="M752 144 L773 165" stroke="#4a80c0" stroke-width="1.8"/><path d="M750 142 L757.5 144.5 L752.5 149.5 Z M775 166.7 L767.5 164.2 L772.5 159.2 Z" fill="#4a80c0"/><rect x="788.5" y="142.5" width="23.5" height="24" fill="#fff" stroke="#6a6a6a"/><rect x="788" y="142" width="24.5" height="3" fill="#3f6fb0"/><text x="790.5" y="154" font-family="Liberation Mono" font-size="6.5" fill="#9a9a9a">01001</text><text x="790.5" y="163" font-family="Liberation Mono" font-size="6.5" fill="#9a9a9a">10</text><rect x="802" y="156.5" width="10" height="10" fill="#fff" stroke="#6a6a6a"/><path d="M804 161.5 L806.5 164.5 L811 158.5" fill="none" stroke="#3f6fb0" stroke-width="1.6"/><path d="M837 142 L848.3 146.5 V156 C848.3 161.5 843 165 837 167 C831 165 825.8 161.5 825.8 156 V146.5 Z" fill="#2eaaee"/><path d="M832.5 155 L835.8 158 L841.5 152.5" fill="none" stroke="#fff" stroke-width="2"/><rect x="863.5" y="142.5" width="23.5" height="24" fill="#fff" stroke="#6a6a6a"/><rect x="863" y="142" width="24.5" height="3" fill="#3f6fb0"/><path d="M867 155 V148 H881 V151" fill="none" stroke="#5cc05c" stroke-width="1"/><rect x="869" y="148" width="7" height="5" fill="#ddd" stroke="#8a8a8a" stroke-width="0.8"/><rect x="879" y="151" width="7" height="4" fill="#ddd" stroke="#5a8ad0" stroke-width="0.8"/><rect x="866" y="157" width="7" height="6.5" fill="#ddd" stroke="#8a8a8a" stroke-width="0.8"/><circle cx="880.5" cy="160" r="4.5" fill="#e8f0f8" stroke="#9ab" stroke-width="0.8"/><rect x="896.2" y="140" width="1.2" height="30" fill="#d5dae0"/><rect x="909.5" y="146.5" width="16.5" height="16.5" fill="none" stroke="#e0e0e0" stroke-width="1"/><rect x="909.8" y="156" width="7.5" height="7" fill="#fff" stroke="#9a9a9a" stroke-width="1.6"/><path d="M916 156 L924 148" stroke="#a6a6a6" stroke-width="2"/><path d="M919.5 146 H926.5 V153 Z" fill="#a6a6a6"/><rect x="940" y="144" width="6" height="4.2" rx="1.2" fill="#ee8822"/><path d="M946 146 C950 145.5 953 147 953 150" fill="none" stroke="#3a85d0" stroke-width="1.6"/><path d="M953.5 150 L956 153 L953.5 156 L951 153 Z M949.5 155 L951.5 157.5 L949.5 160 L947.5 157.5 Z" fill="#ee8822"/><path d="M953 158 C953 161.5 956 163 959 163" fill="none" stroke="#3a85d0" stroke-width="1.6"/><path d="M959 160 L964.6 162.8 L959 165.5 Z" fill="#ee8822"/></svg><span class="t" style="left:468.75px;top:146.42px;font-size:15.8px;line-height:15.8px;color:#1e1e1e;transform:scaleX(0.9833);">Zoom</span><span class="t" style="left:516.10px;top:146.76px;font-size:15.4px;line-height:15.4px;color:#1e1e1e;transform:scaleX(0.8971);">100%</span><svg class="a" style="left:313px;top:182px;overflow:hidden" width="1576" height="708" viewBox="313 182 1576 708"><rect x="313" y="182" width="1576" height="708" fill="#d3e2f2"/><path d="M719 363.5 H731 L741.3 369.5 H754" stroke="#70b370" stroke-opacity="0.62" stroke-width="1.7" fill="none"/><path d="M719 383.5 H731 L741.3 389.5 H754" stroke="#70b370" stroke-opacity="0.62" stroke-width="1.7" fill="none"/><path d="M719 403.5 H731 L741.3 409.5 H754" stroke="#70b370" stroke-opacity="0.62" stroke-width="1.7" fill="none"/><path d="M719 423.5 H731 L741.3 429.5 H754" stroke="#70b370" stroke-opacity="0.62" stroke-width="1.7" fill="none"/><path d="M719 443.5 H731 L741.3 449.5 H754" stroke="#70b370" stroke-opacity="0.62" stroke-width="1.7" fill="none"/><path d="M719 463.5 H731 L741.3 469.5 H754" stroke="#70b370" stroke-opacity="0.62" stroke-width="1.7" fill="none"/><path d="M719 483.5 H731 L741.3 489.5 H754" stroke="#70b370" stroke-opacity="0.62" stroke-width="1.7" fill="none"/><path d="M719 503.5 H731 L741.3 509.5 H754" stroke="#70b370" stroke-opacity="0.62" stroke-width="1.7" fill="none"/><path d="M719 523.5 H731 L741.5 529.5 H754" stroke="#70b370" stroke-opacity="0.62" stroke-width="1.7" fill="none"/><path d="M719 523.5 H731 L741.5 549.5 H754" stroke="#70b370" stroke-opacity="0.62" stroke-width="1.7" fill="none"/><path d="M719 523.5 H731 L741.5 569.5 H754" stroke="#70b370" stroke-opacity="0.62" stroke-width="1.7" fill="none"/><path d="M719 523.5 H731 L741.5 589.5 H754" stroke="#70b370" stroke-opacity="0.62" stroke-width="1.7" fill="none"/><path d="M719 523.5 H731 L741.5 609.5 H754" stroke="#70b370" stroke-opacity="0.62" stroke-width="1.7" fill="none"/><path d="M719 523.5 H731 L741.5 629.5 H754" stroke="#70b370" stroke-opacity="0.62" stroke-width="1.7" fill="none"/><path d="M717 659.5 H728.5 L741.7 649.5 H754" stroke="#70b370" stroke-opacity="0.62" stroke-width="1.7" fill="none"/><path d="M717 679.5 H728.5 L741.7 669.5 H754" stroke="#70b370" stroke-opacity="0.62" stroke-width="1.7" fill="none"/><path d="M717 699.5 H728.5 L741.7 689.5 H754" stroke="#70b370" stroke-opacity="0.62" stroke-width="1.7" fill="none"/><path d="M717 719.5 H728.5 L741.7 709.5 H754" stroke="#70b370" stroke-opacity="0.62" stroke-width="1.7" fill="none"/><path d="M717 739.5 H728.5 L741.7 729.5 H754" stroke="#70b370" stroke-opacity="0.62" stroke-width="1.7" fill="none"/><path d="M1053 389.5 H1389" stroke="#a882bc" stroke-opacity="0.62" stroke-width="2" fill="none"/><path d="M1053 429.5 H1389" stroke="#a882bc" stroke-opacity="0.62" stroke-width="2" fill="none"/><path d="M1053 669.5 H1065 L1376 409.5 H1389" stroke="#a882bc" stroke-opacity="0.62" stroke-width="2" fill="none"/><path d="M1053 689.5 H1065 L1078.5 597 H1092" stroke="#a882bc" stroke-opacity="0.62" stroke-width="2" fill="none"/><path d="M1053 709.5 H1065.8 L1078.5 617 H1092" stroke="#a882bc" stroke-opacity="0.62" stroke-width="2" fill="none"/><path d="M1374.5 637 H1386.7 L1376 449.5 H1389" stroke="#5ea3d4" stroke-opacity="0.6" stroke-width="2" fill="none"/><path d="M472.5 294.5 H693.5 A15 15 0 0 1 708.5 309.5 V531 A15 15 0 0 1 693.5 546 H472.5 A15 15 0 0 1 457.5 531 V309.5 A15 15 0 0 1 472.5 294.5 Z" fill="#c3d3e5"/><path d="M463 289.5 H692 A11 11 0 0 1 703 300.5 V530 A11 11 0 0 1 692 541 H463 A11 11 0 0 1 452 530 V300.5 A11 11 0 0 1 463 289.5 Z" fill="#ffffff"/><path d="M452 333.1 V300.5 A11 11 0 0 1 463 289.5 H692 A11 11 0 0 1 703 300.5 V333.1 Z" fill="#70b370"/><circle cx="473" cy="310.5" r="15.5" fill="#ffffff"/><path d="M463.5 303.5 V318.5 A5.25 2 0 0 0 474 318.5 V303.5 Z" fill="#f2be5c"/><ellipse cx="468.75" cy="303.5" rx="5.25" ry="2.2" fill="#f7d189"/><rect x="470.5" y="309.0" width="9.5" height="10" fill="#e8e8e8" stroke="#9a9a9a" stroke-width="0.8"/><rect x="470" y="308.5" width="10.5" height="2.2" fill="#8a8a8a"/><rect x="468" y="308.7" width="3" height="1.8" fill="#e0642a"/><path d="M473.8 311.0 V319.0 M477 311.0 V319.0" stroke="#9a9a9a" stroke-width="0.8"/><text x="493" y="317.5" font-family="Liberation Sans" font-size="18" fill="#fbfbf5" stroke="#fbfbf5" stroke-width="0.35" textLength="51.69" lengthAdjust="spacingAndGlyphs">Orders</text><circle cx="682.5" cy="311.0" r="10.8" fill="#4e8a4f"/><path d="M674.8 316.3 H690.2 L682.5 304.3 Z" fill="#ffffff"/><rect x="461.3" y="337.2" width="12.8" height="12.6" rx="1.8" fill="#fff" stroke="#5a5a5a" stroke-width="1.8"/><path d="M464.5 343.5 H471" stroke="#5a5a5a" stroke-width="1.8"/><rect x="480" y="335.5" width="17.5" height="17.5" fill="#62b462"/><rect x="483" y="338.5" width="11.5" height="11.5" fill="#9ddd9d"/><text x="503.5" y="348.5" font-family="Liberation Sans" font-weight="700" font-size="13.8" fill="#151515" textLength="43.7" lengthAdjust="spacingAndGlyphs">Orders</text><path d="M483.5 355.0 H494.5 V361.5 L491 364.5 V373.5 L489 374.5 L487 373.0 V364.5 L483.5 361.5 Z" fill="#f4d27a" stroke="#b8963a" stroke-width="1"/><rect x="486" y="357.0" width="6" height="2.5" fill="#fff" stroke="#b8963a" stroke-width="0.6"/><path d="M491 367.0 H493 M491 370.0 H493" stroke="#caa04a" stroke-width="1"/><text x="504.5" y="368.5" font-family="Liberation Sans" font-size="13.8" fill="#1c1c1c" textLength="47.85" lengthAdjust="spacingAndGlyphs">OrderID</text><path d="M483.5 375.0 H494.5 V381.5 L491 384.5 V393.5 L489 394.5 L487 393.0 V384.5 L483.5 381.5 Z" fill="#dedede" stroke="#7a7a7a" stroke-width="1"/><rect x="486" y="377.0" width="6" height="2.5" fill="#fff" stroke="#7a7a7a" stroke-width="0.6"/><path d="M491 387.0 H493 M491 390.0 H493" stroke="#9a9a9a" stroke-width="1"/><text x="504.5" y="388.5" font-family="Liberation Sans" font-size="13.8" fill="#1c1c1c" textLength="71.78" lengthAdjust="spacingAndGlyphs">CustomerID</text><path d="M483.5 395.0 H494.5 V401.5 L491 404.5 V413.5 L489 414.5 L487 413.0 V404.5 L483.5 401.5 Z" fill="#dedede" stroke="#7a7a7a" stroke-width="1"/><rect x="486" y="397.0" width="6" height="2.5" fill="#fff" stroke="#7a7a7a" stroke-width="0.6"/><path d="M491 407.0 H493 M491 410.0 H493" stroke="#9a9a9a" stroke-width="1"/><text x="504.5" y="408.5" font-family="Liberation Sans" font-size="13.8" fill="#1c1c1c" textLength="73.29" lengthAdjust="spacingAndGlyphs">EmployeeID</text><path d="M479 424.0 L485 418.0 H499 V430.0 H485 Z" fill="#ffc107"/><path d="M479 424.0 L485 418.0 H499 V423.7 Z" fill="#ffd454"/><text x="504.5" y="428.5" font-family="Liberation Sans" font-size="13.8" fill="#1c1c1c" textLength="62.81" lengthAdjust="spacingAndGlyphs">OrderDate</text><path d="M479 444.0 L485 438.0 H499 V450.0 H485 Z" fill="#ffc107"/><path d="M479 444.0 L485 438.0 H499 V443.7 Z" fill="#ffd454"/><text x="504.5" y="448.5" font-family="Liberation Sans" font-size="13.8" fill="#1c1c1c" textLength="83.02" lengthAdjust="spacingAndGlyphs">RequiredDate</text><path d="M479 464.0 L485 458.0 H499 V470.0 H485 Z" fill="#ffc107"/><path d="M479 464.0 L485 458.0 H499 V463.7 Z" fill="#ffd454"/><text x="504.5" y="468.5" font-family="Liberation Sans" font-size="13.8" fill="#1c1c1c" textLength="77.8" lengthAdjust="spacingAndGlyphs">ShippedDate</text><path d="M483.5 475.0 H494.5 V481.5 L491 484.5 V493.5 L489 494.5 L487 493.0 V484.5 L483.5 481.5 Z" fill="#dedede" stroke="#7a7a7a" stroke-width="1"/><rect x="486" y="477.0" width="6" height="2.5" fill="#fff" stroke="#7a7a7a" stroke-width="0.6"/><path d="M491 487.0 H493 M491 490.0 H493" stroke="#9a9a9a" stroke-width="1"/><text x="504.5" y="488.5" font-family="Liberation Sans" font-size="13.8" fill="#1c1c1c" textLength="46.13" lengthAdjust="spacingAndGlyphs">ShipVia</text><path d="M479 504.0 L485 498.0 H499 V510.0 H485 Z" fill="#ffc107"/><path d="M479 504.0 L485 498.0 H499 V503.7 Z" fill="#ffd454"/><text x="504.5" y="508.5" font-family="Liberation Sans" font-size="13.8" fill="#1c1c1c" textLength="41.88" lengthAdjust="spacingAndGlyphs">Freight</text><path d="M479 524.0 L485 518.0 H499 V530.0 H485 Z" fill="#ffc107"/><path d="M479 524.0 L485 518.0 H499 V523.7 Z" fill="#ffd454"/><text x="504.5" y="528.5" font-family="Liberation Sans" font-size="13.8" fill="#1c1c1c" textLength="62.82" lengthAdjust="spacingAndGlyphs">ShipName</text><path d="M688.5 345.5 L692.5 339.5 L696.5 345.5 Z" fill="#c8c8c8"/><rect x="689" y="353.5" width="7" height="112" fill="#c9c9c9"/><path d="M688.5 528.0 L692.5 533.5 L696.5 528.0 Z" fill="#d0d0d0"/><path d="M470.0 590.5 H691.5 A15 15 0 0 1 706.5 605.5 V827 A15 15 0 0 1 691.5 842 H470.0 A15 15 0 0 1 455.0 827 V605.5 A15 15 0 0 1 470.0 590.5 Z" fill="#c3d3e5"/><path d="M460.5 585.5 H690 A11 11 0 0 1 701 596.5 V826 A11 11 0 0 1 690 837 H460.5 A11 11 0 0 1 449.5 826 V596.5 A11 11 0 0 1 460.5 585.5 Z" fill="#ffffff"/><path d="M449.5 629.1 V596.5 A11 11 0 0 1 460.5 585.5 H690 A11 11 0 0 1 701 596.5 V629.1 Z" fill="#70b370"/><circle cx="470.5" cy="606.5" r="15.5" fill="#ffffff"/><path d="M461.0 599.5 V614.5 A5.25 2 0 0 0 471.5 614.5 V599.5 Z" fill="#f2be5c"/><ellipse cx="466.25" cy="599.5" rx="5.25" ry="2.2" fill="#f7d189"/><rect x="468.0" y="605.0" width="9.5" height="10" fill="#e8e8e8" stroke="#9a9a9a" stroke-width="0.8"/><rect x="467.5" y="604.5" width="10.5" height="2.2" fill="#8a8a8a"/><rect x="465.5" y="604.7" width="3" height="1.8" fill="#e0642a"/><path d="M471.3 607.0 V615.0 M474.5 607.0 V615.0" stroke="#9a9a9a" stroke-width="0.8"/><text x="490.5" y="613.5" font-family="Liberation Sans" font-size="18" fill="#fbfbf5" stroke="#fbfbf5" stroke-width="0.35" textLength="94.94" lengthAdjust="spacingAndGlyphs">OrderDetails</text><circle cx="680.5" cy="607.0" r="10.8" fill="#4e8a4f"/><path d="M672.8 612.3 H688.2 L680.5 600.3 Z" fill="#ffffff"/><rect x="458.8" y="633.2" width="12.8" height="12.6" rx="1.8" fill="#fff" stroke="#5a5a5a" stroke-width="1.8"/><path d="M462.0 639.5 H468.5" stroke="#5a5a5a" stroke-width="1.8"/><rect x="477.5" y="631.5" width="17.5" height="17.5" fill="#62b462"/><rect x="480.5" y="634.5" width="11.5" height="11.5" fill="#9ddd9d"/><text x="501.0" y="644.5" font-family="Liberation Sans" font-weight="700" font-size="13.8" fill="#151515" textLength="79.98" lengthAdjust="spacingAndGlyphs">OrderDetails</text><path d="M477.0 651.0 H488.0 V657.5 L484.5 660.5 V669.5 L482.5 670.5 L480.5 669.0 V660.5 L477.0 657.5 Z" fill="#dedede" stroke="#7a7a7a" stroke-width="1"/><rect x="479.5" y="653.0" width="6" height="2.5" fill="#fff" stroke="#7a7a7a" stroke-width="0.6"/><path d="M484.5 663.0 H486.5 M484.5 666.0 H486.5" stroke="#9a9a9a" stroke-width="1"/><path d="M481.5 651.0 H492.5 V657.5 L489.0 660.5 V669.5 L487.0 670.5 L485.0 669.0 V660.5 L481.5 657.5 Z" fill="#f4d27a" stroke="#b8963a" stroke-width="1"/><rect x="484.0" y="653.0" width="6" height="2.5" fill="#fff" stroke="#b8963a" stroke-width="0.6"/><path d="M489.0 663.0 H491.0 M489.0 666.0 H491.0" stroke="#caa04a" stroke-width="1"/><text x="502.0" y="664.5" font-family="Liberation Sans" font-size="13.8" fill="#1c1c1c" textLength="47.85" lengthAdjust="spacingAndGlyphs">OrderID</text><path d="M477.0 671.0 H488.0 V677.5 L484.5 680.5 V689.5 L482.5 690.5 L480.5 689.0 V680.5 L477.0 677.5 Z" fill="#dedede" stroke="#7a7a7a" stroke-width="1"/><rect x="479.5" y="673.0" width="6" height="2.5" fill="#fff" stroke="#7a7a7a" stroke-width="0.6"/><path d="M484.5 683.0 H486.5 M484.5 686.0 H486.5" stroke="#9a9a9a" stroke-width="1"/><path d="M481.5 671.0 H492.5 V677.5 L489.0 680.5 V689.5 L487.0 690.5 L485.0 689.0 V680.5 L481.5 677.5 Z" fill="#f4d27a" stroke="#b8963a" stroke-width="1"/><rect x="484.0" y="673.0" width="6" height="2.5" fill="#fff" stroke="#b8963a" stroke-width="0.6"/><path d="M489.0 683.0 H491.0 M489.0 686.0 H491.0" stroke="#caa04a" stroke-width="1"/><text x="502.0" y="684.5" font-family="Liberation Sans" font-size="13.8" fill="#1c1c1c" textLength="59.82" lengthAdjust="spacingAndGlyphs">ProductID</text><path d="M476.5 700.0 L482.5 694.0 H496.5 V706.0 H482.5 Z" fill="#ffc107"/><path d="M476.5 700.0 L482.5 694.0 H496.5 V699.7 Z" fill="#ffd454"/><text x="502.0" y="704.5" font-family="Liberation Sans" font-size="13.8" fill="#1c1c1c" textLength="54.58" lengthAdjust="spacingAndGlyphs">UnitPrice</text><path d="M476.5 720.0 L482.5 714.0 H496.5 V726.0 H482.5 Z" fill="#ffc107"/><path d="M476.5 720.0 L482.5 714.0 H496.5 V719.7 Z" fill="#ffd454"/><text x="502.0" y="724.5" font-family="Liberation Sans" font-size="13.8" fill="#1c1c1c" textLength="50.11" lengthAdjust="spacingAndGlyphs">Quantity</text><path d="M476.5 740.0 L482.5 734.0 H496.5 V746.0 H482.5 Z" fill="#ffc107"/><path d="M476.5 740.0 L482.5 734.0 H496.5 V739.7 Z" fill="#ffd454"/><text x="502.0" y="744.5" font-family="Liberation Sans" font-size="13.8" fill="#1c1c1c" textLength="52.35" lengthAdjust="spacingAndGlyphs">Discount</text><path d="M790.0 300.5 H1027.5 A15 15 0 0 1 1042.5 315.5 V818.5 A15 15 0 0 1 1027.5 833.5 H790.0 A15 15 0 0 1 775.0 818.5 V315.5 A15 15 0 0 1 790.0 300.5 Z" fill="#c3d3e5"/><path d="M780.5 295.5 H1026 A11 11 0 0 1 1037 306.5 V817.5 A11 11 0 0 1 1026 828.5 H780.5 A11 11 0 0 1 769.5 817.5 V306.5 A11 11 0 0 1 780.5 295.5 Z" fill="#ffffff"/><path d="M769.5 339.1 V306.5 A11 11 0 0 1 780.5 295.5 H1026 A11 11 0 0 1 1037 306.5 V339.1 Z" fill="#a882bc"/><circle cx="790.5" cy="316.5" r="15.5" fill="#ffffff"/><rect x="781.5" y="311.5" width="11" height="11" fill="#a8d0f0"/><rect x="786.5" y="307.0" width="11" height="11" fill="#5a9ad6" opacity="0.9"/><rect x="786.5" y="311.5" width="6" height="6.5" fill="#f4cc30"/><text x="810.5" y="323.5" font-family="Liberation Sans" font-size="18" fill="#fbfbf5" stroke="#fbfbf5" stroke-width="0.35" textLength="188.02" lengthAdjust="spacingAndGlyphs">Join_Order_OrderDetails</text><circle cx="1016.5" cy="317.0" r="10.8" fill="#7b5e8e"/><path d="M1008.8 322.3 H1024.2 L1016.5 310.3 Z" fill="#ffffff"/><rect x="778.8" y="343.2" width="12.8" height="12.6" rx="1.8" fill="#fff" stroke="#5a5a5a" stroke-width="1.8"/><path d="M782.0 349.5 H788.5" stroke="#5a5a5a" stroke-width="1.8"/><rect x="797.5" y="341.5" width="17.5" height="17.5" fill="#62b462"/><rect x="800.5" y="344.5" width="11.5" height="11.5" fill="#9ddd9d"/><text x="821.0" y="354.5" font-family="Liberation Sans" font-weight="700" font-size="13.8" fill="#151515" textLength="158.48" lengthAdjust="spacingAndGlyphs">Join_Order_OrderDetails</text><path d="M796.5 370.0 L802.5 364.0 H816.5 V376.0 H802.5 Z" fill="#ffc107"/><path d="M796.5 370.0 L802.5 364.0 H816.5 V369.7 Z" fill="#ffd454"/><text x="822.0" y="374.5" font-family="Liberation Sans" font-size="13.8" fill="#1c1c1c" textLength="47.85" lengthAdjust="spacingAndGlyphs">OrderID</text><path d="M796.5 390.0 L802.5 384.0 H816.5 V396.0 H802.5 Z" fill="#ffc107"/><path d="M796.5 390.0 L802.5 384.0 H816.5 V389.7 Z" fill="#ffd454"/><text x="822.0" y="394.5" font-family="Liberation Sans" font-size="13.8" fill="#1c1c1c" textLength="71.78" lengthAdjust="spacingAndGlyphs">CustomerID</text><path d="M796.5 410.0 L802.5 404.0 H816.5 V416.0 H802.5 Z" fill="#ffc107"/><path d="M796.5 410.0 L802.5 404.0 H816.5 V409.7 Z" fill="#ffd454"/><text x="822.0" y="414.5" font-family="Liberation Sans" font-size="13.8" fill="#1c1c1c" textLength="73.29" lengthAdjust="spacingAndGlyphs">EmployeeID</text><path d="M796.5 430.0 L802.5 424.0 H816.5 V436.0 H802.5 Z" fill="#ffc107"/><path d="M796.5 430.0 L802.5 424.0 H816.5 V429.7 Z" fill="#ffd454"/><text x="822.0" y="434.5" font-family="Liberation Sans" font-size="13.8" fill="#1c1c1c" textLength="62.81" lengthAdjust="spacingAndGlyphs">OrderDate</text><path d="M796.5 450.0 L802.5 444.0 H816.5 V456.0 H802.5 Z" fill="#ffc107"/><path d="M796.5 450.0 L802.5 444.0 H816.5 V449.7 Z" fill="#ffd454"/><text x="822.0" y="454.5" font-family="Liberation Sans" font-size="13.8" fill="#1c1c1c" textLength="83.02" lengthAdjust="spacingAndGlyphs">RequiredDate</text><path d="M796.5 470.0 L802.5 464.0 H816.5 V476.0 H802.5 Z" fill="#ffc107"/><path d="M796.5 470.0 L802.5 464.0 H816.5 V469.7 Z" fill="#ffd454"/><text x="822.0" y="474.5" font-family="Liberation Sans" font-size="13.8" fill="#1c1c1c" textLength="77.8" lengthAdjust="spacingAndGlyphs">ShippedDate</text><path d="M796.5 490.0 L802.5 484.0 H816.5 V496.0 H802.5 Z" fill="#ffc107"/><path d="M796.5 490.0 L802.5 484.0 H816.5 V489.7 Z" fill="#ffd454"/><text x="822.0" y="494.5" font-family="Liberation Sans" font-size="13.8" fill="#1c1c1c" textLength="46.13" lengthAdjust="spacingAndGlyphs">ShipVia</text><path d="M796.5 510.0 L802.5 504.0 H816.5 V516.0 H802.5 Z" fill="#ffc107"/><path d="M796.5 510.0 L802.5 504.0 H816.5 V509.7 Z" fill="#ffd454"/><text x="822.0" y="514.5" font-family="Liberation Sans" font-size="13.8" fill="#1c1c1c" textLength="41.88" lengthAdjust="spacingAndGlyphs">Freight</text><path d="M796.5 530.0 L802.5 524.0 H816.5 V536.0 H802.5 Z" fill="#ffc107"/><path d="M796.5 530.0 L802.5 524.0 H816.5 V529.7 Z" fill="#ffd454"/><text x="822.0" y="534.5" font-family="Liberation Sans" font-size="13.8" fill="#1c1c1c" textLength="62.82" lengthAdjust="spacingAndGlyphs">ShipName</text><path d="M796.5 550.0 L802.5 544.0 H816.5 V556.0 H802.5 Z" fill="#ffc107"/><path d="M796.5 550.0 L802.5 544.0 H816.5 V549.7 Z" fill="#ffd454"/><text x="822.0" y="554.5" font-family="Liberation Sans" font-size="13.8" fill="#1c1c1c" textLength="76.29" lengthAdjust="spacingAndGlyphs">ShipAddress</text><path d="M796.5 570.0 L802.5 564.0 H816.5 V576.0 H802.5 Z" fill="#ffc107"/><path d="M796.5 570.0 L802.5 564.0 H816.5 V569.7 Z" fill="#ffd454"/><text x="822.0" y="574.5" font-family="Liberation Sans" font-size="13.8" fill="#1c1c1c" textLength="50.1" lengthAdjust="spacingAndGlyphs">ShipCity</text><path d="M796.5 590.0 L802.5 584.0 H816.5 V596.0 H802.5 Z" fill="#ffc107"/><path d="M796.5 590.0 L802.5 584.0 H816.5 V589.7 Z" fill="#ffd454"/><text x="822.0" y="594.5" font-family="Liberation Sans" font-size="13.8" fill="#1c1c1c" textLength="69.57" lengthAdjust="spacingAndGlyphs">ShipRegion</text><path d="M796.5 610.0 L802.5 604.0 H816.5 V616.0 H802.5 Z" fill="#ffc107"/><path d="M796.5 610.0 L802.5 604.0 H816.5 V609.7 Z" fill="#ffd454"/><text x="822.0" y="614.5" font-family="Liberation Sans" font-size="13.8" fill="#1c1c1c" textLength="96.49" lengthAdjust="spacingAndGlyphs">ShipPostalCode</text><path d="M796.5 630.0 L802.5 624.0 H816.5 V636.0 H802.5 Z" fill="#ffc107"/><path d="M796.5 630.0 L802.5 624.0 H816.5 V629.7 Z" fill="#ffd454"/><text x="822.0" y="634.5" font-family="Liberation Sans" font-size="13.8" fill="#1c1c1c" textLength="74.04" lengthAdjust="spacingAndGlyphs">ShipCountry</text><path d="M796.5 650.0 L802.5 644.0 H816.5 V656.0 H802.5 Z" fill="#ffc107"/><path d="M796.5 650.0 L802.5 644.0 H816.5 V649.7 Z" fill="#ffd454"/><text x="822.0" y="654.5" font-family="Liberation Sans" font-size="13.8" fill="#1c1c1c" textLength="62.81" lengthAdjust="spacingAndGlyphs">OrderID_1</text><path d="M796.5 670.0 L802.5 664.0 H816.5 V676.0 H802.5 Z" fill="#ffc107"/><path d="M796.5 670.0 L802.5 664.0 H816.5 V669.7 Z" fill="#ffd454"/><text x="822.0" y="674.5" font-family="Liberation Sans" font-size="13.8" fill="#1c1c1c" textLength="59.82" lengthAdjust="spacingAndGlyphs">ProductID</text><path d="M796.5 690.0 L802.5 684.0 H816.5 V696.0 H802.5 Z" fill="#ffc107"/><path d="M796.5 690.0 L802.5 684.0 H816.5 V689.7 Z" fill="#ffd454"/><text x="822.0" y="694.5" font-family="Liberation Sans" font-size="13.8" fill="#1c1c1c" textLength="54.58" lengthAdjust="spacingAndGlyphs">UnitPrice</text><path d="M796.5 710.0 L802.5 704.0 H816.5 V716.0 H802.5 Z" fill="#ffc107"/><path d="M796.5 710.0 L802.5 704.0 H816.5 V709.7 Z" fill="#ffd454"/><text x="822.0" y="714.5" font-family="Liberation Sans" font-size="13.8" fill="#1c1c1c" textLength="50.11" lengthAdjust="spacingAndGlyphs">Quantity</text><path d="M796.5 730.0 L802.5 724.0 H816.5 V736.0 H802.5 Z" fill="#ffc107"/><path d="M796.5 730.0 L802.5 724.0 H816.5 V729.7 Z" fill="#ffd454"/><text x="822.0" y="734.5" font-family="Liberation Sans" font-size="13.8" fill="#1c1c1c" textLength="52.35" lengthAdjust="spacingAndGlyphs">Discount</text><path d="M796.5 750.0 L802.5 744.0 H816.5 V756.0 H802.5 Z" fill="#ffc107"/><path d="M796.5 750.0 L802.5 744.0 H816.5 V749.7 Z" fill="#ffd454"/><text x="822.0" y="754.5" font-family="Liberation Sans" font-size="13.8" fill="#1c1c1c" textLength="95.72" lengthAdjust="spacingAndGlyphs">&lt;New Member&gt;</text><path d="M1127.5 528 H1349.0 A15 15 0 0 1 1364.0 543 V764.5 A15 15 0 0 1 1349.0 779.5 H1127.5 A15 15 0 0 1 1112.5 764.5 V543 A15 15 0 0 1 1127.5 528 Z" fill="#c3d3e5"/><path d="M1118 523 H1347.5 A11 11 0 0 1 1358.5 534 V763.5 A11 11 0 0 1 1347.5 774.5 H1118 A11 11 0 0 1 1107 763.5 V534 A11 11 0 0 1 1118 523 Z" fill="#ecf6f4"/><path d="M1107 566.6 V534 A11 11 0 0 1 1118 523 H1347.5 A11 11 0 0 1 1358.5 534 V566.6 Z" fill="#6da8d2"/><circle cx="1128" cy="544" r="15.5" fill="#ffffff"/><path d="M1121.6 544.7 Q1124 537.5 1127.2 538.4 Q1128.6 539 1127.6 545 Q1127.4 551 1130.5 550.5 Q1134 549.5 1136.4 543.5" fill="none" stroke="#333" stroke-width="1.3" stroke-linecap="round"/><path d="M1126.6 539.5 Q1127.2 545 1127.8 548" fill="none" stroke="#333" stroke-width="1.6"/><path d="M1134.3 538.4 Q1130 540 1127 545 Q1124 550 1119.4 551.4" fill="none" stroke="#333" stroke-width="1.2" stroke-linecap="round"/><circle cx="1134.6" cy="538.3" r="1.4" fill="#333"/><text x="1148" y="551" font-family="Liberation Sans" font-size="18" fill="#fbfbf5" stroke="#fbfbf5" stroke-width="0.35" textLength="83.68" lengthAdjust="spacingAndGlyphs">Expression</text><circle cx="1338.0" cy="544.5" r="10.8" fill="#4d7897"/><path d="M1330.3 549.8 H1345.7 L1338.0 537.8 Z" fill="#ffffff"/><rect x="1116.3" y="570.7" width="12.8" height="12.6" rx="1.8" fill="#fff" stroke="#5a5a5a" stroke-width="1.8"/><path d="M1119.5 577 H1126" stroke="#5a5a5a" stroke-width="1.8"/><rect x="1135" y="569" width="17.5" height="17.5" fill="#62b462"/><rect x="1138" y="572" width="11.5" height="11.5" fill="#9ddd9d"/><text x="1158.5" y="582" font-family="Liberation Sans" font-weight="700" font-size="13.8" fill="#151515" textLength="71.84" lengthAdjust="spacingAndGlyphs">Expression</text><path d="M1134 597.5 L1140 591.5 H1154 V603.5 H1140 Z" fill="#ffc107"/><path d="M1134 597.5 L1140 591.5 H1154 V597.2 Z" fill="#ffd454"/><text x="1159.5" y="602" font-family="Liberation Sans" font-size="13.8" fill="#1c1c1c" textLength="54.58" lengthAdjust="spacingAndGlyphs">UnitPrice</text><path d="M1134 617.5 L1140 611.5 H1154 V623.5 H1140 Z" fill="#ffc107"/><path d="M1134 617.5 L1140 611.5 H1154 V617.2 Z" fill="#ffd454"/><text x="1159.5" y="622" font-family="Liberation Sans" font-size="13.8" fill="#1c1c1c" textLength="50.11" lengthAdjust="spacingAndGlyphs">Quantity</text><path d="M1134 637.5 L1140 631.5 H1154 V643.5 H1140 Z" fill="#ffc107"/><path d="M1134 637.5 L1140 631.5 H1154 V637.2 Z" fill="#ffd454"/><text x="1159.5" y="642" font-family="Liberation Sans" font-size="13.8" fill="#1c1c1c" textLength="28.42" lengthAdjust="spacingAndGlyphs">Total</text><path d="M1134 657.5 L1140 651.5 H1154 V663.5 H1140 Z" fill="#ffc107"/><path d="M1134 657.5 L1140 651.5 H1154 V657.2 Z" fill="#ffd454"/><text x="1159.5" y="662" font-family="Liberation Sans" font-size="13.8" fill="#1c1c1c" textLength="95.72" lengthAdjust="spacingAndGlyphs">&lt;New Member&gt;</text><path d="M1425.0 320.5 H1647.0 A15 15 0 0 1 1662.0 335.5 V557 A15 15 0 0 1 1647.0 572 H1425.0 A15 15 0 0 1 1410.0 557 V335.5 A15 15 0 0 1 1425.0 320.5 Z" fill="#c3d3e5"/><path d="M1415.5 315.5 H1645.5 A11 11 0 0 1 1656.5 326.5 V556 A11 11 0 0 1 1645.5 567 H1415.5 A11 11 0 0 1 1404.5 556 V326.5 A11 11 0 0 1 1415.5 315.5 Z" fill="#ffffff"/><path d="M1404.5 359.1 V326.5 A11 11 0 0 1 1415.5 315.5 H1645.5 A11 11 0 0 1 1656.5 326.5 V359.1 Z" fill="#c7ae50"/><circle cx="1425.5" cy="336.5" r="15.5" fill="#ffffff"/><rect x="1418.5" y="327.0" width="12" height="17" fill="#d7e8f6" stroke="#a9c8e4" stroke-width="0.8"/><rect x="1420.5" y="329.5" width="8" height="5" fill="#b9d5ee"/><rect x="1419.0" y="339.0" width="14.5" height="7.5" rx="1.5" fill="#1d6b2c"/><text x="1426.25" y="345.1" text-anchor="middle" font-family="Liberation Sans" font-weight="700" font-size="5.5" fill="#fff">XLS</text><text x="1445.5" y="343.5" font-family="Liberation Sans" font-size="18" fill="#fbfbf5" stroke="#fbfbf5" stroke-width="0.35" textLength="92.13" lengthAdjust="spacingAndGlyphs">ExcelReport</text><circle cx="1636.0" cy="337.0" r="10.8" fill="#8f7b3a"/><path d="M1628.3 342.3 H1643.7 L1636.0 330.3 Z" fill="#ffffff"/><rect x="1413.8" y="363.2" width="12.8" height="12.6" rx="1.8" fill="#fff" stroke="#5a5a5a" stroke-width="1.8"/><path d="M1417.0 369.5 H1423.5" stroke="#5a5a5a" stroke-width="1.8"/><rect x="1432.5" y="361.5" width="17.5" height="17.5" fill="#62b462"/><rect x="1435.5" y="364.5" width="11.5" height="11.5" fill="#9ddd9d"/><text x="1456.0" y="374.5" font-family="Liberation Sans" font-weight="700" font-size="13.8" fill="#151515" textLength="77.76" lengthAdjust="spacingAndGlyphs">ExcelReport</text><path d="M1431.5 390.0 L1437.5 384.0 H1451.5 V396.0 H1437.5 Z" fill="#ffc107"/><path d="M1431.5 390.0 L1437.5 384.0 H1451.5 V389.7 Z" fill="#ffd454"/><text x="1457.0" y="394.5" font-family="Liberation Sans" font-size="13.8" fill="#1c1c1c" textLength="71.78" lengthAdjust="spacingAndGlyphs">CustomerID</text><path d="M1431.5 410.0 L1437.5 404.0 H1451.5 V416.0 H1437.5 Z" fill="#ffc107"/><path d="M1431.5 410.0 L1437.5 404.0 H1451.5 V409.7 Z" fill="#ffd454"/><text x="1457.0" y="414.5" font-family="Liberation Sans" font-size="13.8" fill="#1c1c1c" textLength="59.82" lengthAdjust="spacingAndGlyphs">ProductID</text><path d="M1431.5 430.0 L1437.5 424.0 H1451.5 V436.0 H1437.5 Z" fill="#ffc107"/><path d="M1431.5 430.0 L1437.5 424.0 H1451.5 V429.7 Z" fill="#ffd454"/><text x="1457.0" y="434.5" font-family="Liberation Sans" font-size="13.8" fill="#1c1c1c" textLength="62.81" lengthAdjust="spacingAndGlyphs">OrderDate</text><path d="M1431.5 450.0 L1437.5 444.0 H1451.5 V456.0 H1437.5 Z" fill="#ffc107"/><path d="M1431.5 450.0 L1437.5 444.0 H1451.5 V449.7 Z" fill="#ffd454"/><text x="1457.0" y="454.5" font-family="Liberation Sans" font-size="13.8" fill="#1c1c1c" textLength="28.42" lengthAdjust="spacingAndGlyphs">Total</text><path d="M1431.5 470.0 L1437.5 464.0 H1451.5 V476.0 H1437.5 Z" fill="#ffc107"/><path d="M1431.5 470.0 L1437.5 464.0 H1451.5 V469.7 Z" fill="#ffd454"/><text x="1457.0" y="474.5" font-family="Liberation Sans" font-size="13.8" fill="#1c1c1c" textLength="95.72" lengthAdjust="spacingAndGlyphs">&lt;New Member&gt;</text><rect x="704" y="339.8" width="14.8" height="7.4" rx="1.8" fill="#ffffff" stroke="#cfcfcf" stroke-width="1.2"/><rect x="703.5" y="359.3" width="15.8" height="8.4" rx="1.5" fill="#70b370"/><rect x="703.5" y="379.3" width="15.8" height="8.4" rx="1.5" fill="#70b370"/><rect x="703.5" y="399.3" width="15.8" height="8.4" rx="1.5" fill="#70b370"/><rect x="703.5" y="419.3" width="15.8" height="8.4" rx="1.5" fill="#70b370"/><rect x="703.5" y="439.3" width="15.8" height="8.4" rx="1.5" fill="#70b370"/><rect x="703.5" y="459.3" width="15.8" height="8.4" rx="1.5" fill="#70b370"/><rect x="703.5" y="479.3" width="15.8" height="8.4" rx="1.5" fill="#70b370"/><rect x="703.5" y="499.3" width="15.8" height="8.4" rx="1.5" fill="#70b370"/><rect x="703.5" y="519.3" width="15.8" height="8.4" rx="1.5" fill="#70b370"/><rect x="702" y="635.8" width="14.8" height="7.4" rx="1.8" fill="#ffffff" stroke="#cfcfcf" stroke-width="1.2"/><rect x="701.5" y="655.3" width="15.8" height="8.4" rx="1.5" fill="#70b370"/><rect x="701.5" y="675.3" width="15.8" height="8.4" rx="1.5" fill="#70b370"/><rect x="701.5" y="695.3" width="15.8" height="8.4" rx="1.5" fill="#70b370"/><rect x="701.5" y="715.3" width="15.8" height="8.4" rx="1.5" fill="#70b370"/><rect x="701.5" y="735.3" width="15.8" height="8.4" rx="1.5" fill="#70b370"/><path d="M754.2 345.7 L769.0 349.5 L754.2 353.3 Z" fill="#ffffff" stroke="#cfcfcf" stroke-width="1"/><path d="M753.5 365.2 L769.5 369.5 L753.5 373.8 Z" fill="#70b370"/><path d="M753.5 385.2 L769.5 389.5 L753.5 393.8 Z" fill="#70b370"/><path d="M753.5 405.2 L769.5 409.5 L753.5 413.8 Z" fill="#70b370"/><path d="M753.5 425.2 L769.5 429.5 L753.5 433.8 Z" fill="#70b370"/><path d="M753.5 445.2 L769.5 449.5 L753.5 453.8 Z" fill="#70b370"/><path d="M753.5 465.2 L769.5 469.5 L753.5 473.8 Z" fill="#70b370"/><path d="M753.5 485.2 L769.5 489.5 L753.5 493.8 Z" fill="#70b370"/><path d="M753.5 505.2 L769.5 509.5 L753.5 513.8 Z" fill="#70b370"/><path d="M753.5 525.2 L769.5 529.5 L753.5 533.8 Z" fill="#70b370"/><path d="M753.5 545.2 L769.5 549.5 L753.5 553.8 Z" fill="#70b370"/><path d="M753.5 565.2 L769.5 569.5 L753.5 573.8 Z" fill="#70b370"/><path d="M753.5 585.2 L769.5 589.5 L753.5 593.8 Z" fill="#70b370"/><path d="M753.5 605.2 L769.5 609.5 L753.5 613.8 Z" fill="#70b370"/><path d="M753.5 625.2 L769.5 629.5 L753.5 633.8 Z" fill="#70b370"/><path d="M753.5 645.2 L769.5 649.5 L753.5 653.8 Z" fill="#70b370"/><path d="M753.5 665.2 L769.5 669.5 L753.5 673.8 Z" fill="#70b370"/><path d="M753.5 685.2 L769.5 689.5 L753.5 693.8 Z" fill="#70b370"/><path d="M753.5 705.2 L769.5 709.5 L753.5 713.8 Z" fill="#70b370"/><path d="M753.5 725.2 L769.5 729.5 L753.5 733.8 Z" fill="#70b370"/><path d="M754.2 745.7 L769.0 749.5 L754.2 753.3 Z" fill="#ffffff" stroke="#cfcfcf" stroke-width="1"/><rect x="1038" y="345.8" width="14.8" height="7.4" rx="1.8" fill="#ffffff" stroke="#cfcfcf" stroke-width="1.2"/><rect x="1038" y="365.8" width="14.8" height="7.4" rx="1.8" fill="#ffffff" stroke="#cfcfcf" stroke-width="1.2"/><rect x="1037.5" y="385.3" width="15.8" height="8.4" rx="1.5" fill="#a882bc"/><rect x="1038" y="405.8" width="14.8" height="7.4" rx="1.8" fill="#ffffff" stroke="#cfcfcf" stroke-width="1.2"/><rect x="1037.5" y="425.3" width="15.8" height="8.4" rx="1.5" fill="#a882bc"/><rect x="1038" y="445.8" width="14.8" height="7.4" rx="1.8" fill="#ffffff" stroke="#cfcfcf" stroke-width="1.2"/><rect x="1038" y="465.8" width="14.8" height="7.4" rx="1.8" fill="#ffffff" stroke="#cfcfcf" stroke-width="1.2"/><rect x="1038" y="485.8" width="14.8" height="7.4" rx="1.8" fill="#ffffff" stroke="#cfcfcf" stroke-width="1.2"/><rect x="1038" y="505.8" width="14.8" height="7.4" rx="1.8" fill="#ffffff" stroke="#cfcfcf" stroke-width="1.2"/><rect x="1038" y="525.8" width="14.8" height="7.4" rx="1.8" fill="#ffffff" stroke="#cfcfcf" stroke-width="1.2"/><rect x="1038" y="545.8" width="14.8" height="7.4" rx="1.8" fill="#ffffff" stroke="#cfcfcf" stroke-width="1.2"/><rect x="1038" y="565.8" width="14.8" height="7.4" rx="1.8" fill="#ffffff" stroke="#cfcfcf" stroke-width="1.2"/><rect x="1038" y="585.8" width="14.8" height="7.4" rx="1.8" fill="#ffffff" stroke="#cfcfcf" stroke-width="1.2"/><rect x="1038" y="605.8" width="14.8" height="7.4" rx="1.8" fill="#ffffff" stroke="#cfcfcf" stroke-width="1.2"/><rect x="1038" y="625.8" width="14.8" height="7.4" rx="1.8" fill="#ffffff" stroke="#cfcfcf" stroke-width="1.2"/><rect x="1038" y="645.8" width="14.8" height="7.4" rx="1.8" fill="#ffffff" stroke="#cfcfcf" stroke-width="1.2"/><rect x="1037.5" y="665.3" width="15.8" height="8.4" rx="1.5" fill="#a882bc"/><rect x="1037.5" y="685.3" width="15.8" height="8.4" rx="1.5" fill="#a882bc"/><rect x="1037.5" y="705.3" width="15.8" height="8.4" rx="1.5" fill="#a882bc"/><rect x="1038" y="725.8" width="14.8" height="7.4" rx="1.8" fill="#ffffff" stroke="#cfcfcf" stroke-width="1.2"/><path d="M1091.7 573.2 L1106.5 577 L1091.7 580.8 Z" fill="#ffffff" stroke="#cfcfcf" stroke-width="1"/><path d="M1091 592.7 L1107 597 L1091 601.3 Z" fill="#a882bc"/><path d="M1091 612.7 L1107 617 L1091 621.3 Z" fill="#a882bc"/><path d="M1091.7 653.2 L1106.5 657 L1091.7 660.8 Z" fill="#ffffff" stroke="#cfcfcf" stroke-width="1"/><rect x="1359.5" y="573.3" width="14.8" height="7.4" rx="1.8" fill="#ffffff" stroke="#cfcfcf" stroke-width="1.2"/><rect x="1359.5" y="593.3" width="14.8" height="7.4" rx="1.8" fill="#ffffff" stroke="#cfcfcf" stroke-width="1.2"/><rect x="1359.5" y="613.3" width="14.8" height="7.4" rx="1.8" fill="#ffffff" stroke="#cfcfcf" stroke-width="1.2"/><rect x="1359.0" y="632.8" width="15.8" height="8.4" rx="1.5" fill="#6aa7d4"/><path d="M1389.2 365.7 L1404.0 369.5 L1389.2 373.3 Z" fill="#ffffff" stroke="#cfcfcf" stroke-width="1"/><path d="M1388.5 385.2 L1404.5 389.5 L1388.5 393.8 Z" fill="#a882bc"/><path d="M1388.5 405.2 L1404.5 409.5 L1388.5 413.8 Z" fill="#a882bc"/><path d="M1388.5 425.2 L1404.5 429.5 L1388.5 433.8 Z" fill="#a882bc"/><path d="M1388.5 445.2 L1404.5 449.5 L1388.5 453.8 Z" fill="#6aa7d4"/><path d="M1389.2 465.7 L1404.0 469.5 L1389.2 473.3 Z" fill="#ffffff" stroke="#cfcfcf" stroke-width="1"/><rect x="1657.5" y="365.8" width="14.8" height="7.4" rx="1.8" fill="#ffffff" stroke="#cfcfcf" stroke-width="1.2"/><rect x="1657.5" y="385.8" width="14.8" height="7.4" rx="1.8" fill="#ffffff" stroke="#cfcfcf" stroke-width="1.2"/><rect x="1657.5" y="405.8" width="14.8" height="7.4" rx="1.8" fill="#ffffff" stroke="#cfcfcf" stroke-width="1.2"/><rect x="1657.5" y="425.8" width="14.8" height="7.4" rx="1.8" fill="#ffffff" stroke="#cfcfcf" stroke-width="1.2"/><rect x="1657.5" y="445.8" width="14.8" height="7.4" rx="1.8" fill="#ffffff" stroke="#cfcfcf" stroke-width="1.2"/></svg><div class="a" style="left:1889px;top:182px;width:21px;height:708px;background:#f0f0f0;"></div><div class="a" style="left:1890px;top:225px;width:19px;height:625px;background:#cdcdcd;"></div><svg class="a" style="left:1894px;top:189px" width="12" height="10" viewBox="1894 189 12 10"><path d="M1895.8 196.2 L1899.6 192 L1903.4 196.2" fill="none" stroke="#4f4f4f" stroke-width="2.2"/></svg><svg class="a" style="left:1894px;top:875px" width="12" height="10" viewBox="1894 875 12 10"><path d="M1895.8 877.5 L1899.6 881.7 L1903.4 877.5" fill="none" stroke="#4f4f4f" stroke-width="2.2"/></svg><div class="a" style="left:6px;top:898px;width:1905px;height:43px;background:#e0e7ef;box-sizing:border-box;border:1px solid #d3dae2"></div><span class="t" style="left:10.81px;top:910.72px;font-size:15.8px;line-height:15.8px;color:#2b2b2b;transform:scaleX(0.8941);">Raw Data Preview</span><svg class="a" style="left:1857.5px;top:911px" width="52" height="16" viewBox="1857.5 911 52 16"><path d="M1859.5 916.5 L1868.7 916.5 L1864.1 922.3 Z" fill="#2a2a2a"/><path d="M1878.5 913 H1884.0 V920.5 H1878.5 Z M1879.9 914.3 V919.5 H1882.6 V914.3 Z" fill="#2a2a2a" fill-rule="evenodd"/><rect x="1876.5" y="920" width="9.5" height="1.6" fill="#2a2a2a"/><rect x="1880.6" y="921.5" width="1.4" height="3.2" fill="#2a2a2a"/><path d="M1895.6 916.1 L1903.6 923.6 M1903.6 916.1 L1895.6 923.6" stroke="#2a2a2a" stroke-width="2.7" stroke-linecap="square"/></svg><div class="a" style="left:0px;top:941px;width:1918px;height:39px;background:#f2f5f9;"></div><div class="a" style="left:6.7px;top:949px;width:47.0px;height:23.5px;background:#e0e7ef;"></div><div class="a" style="left:6.7px;top:972.5px;width:47.0px;height:7.5px;background:#c0c0c0;"></div><span class="t" style="left:6.70px;top:950.42px;font-size:15.8px;line-height:15.8px;color:#2b2b2b;transform:scaleX(0.9785);">Output</span><div class="a" style="left:69px;top:949px;width:82px;height:23.5px;background:#e0e7ef;"></div><div class="a" style="left:69px;top:972.5px;width:82px;height:7.5px;background:#c0c0c0;"></div><span class="t" style="left:69.00px;top:950.42px;font-size:15.8px;line-height:15.8px;color:#2b2b2b;transform:scaleX(0.8801);">Job Progress</span><div class="a" style="left:166.5px;top:949px;width:36.30000000000001px;height:23.5px;background:#e0e7ef;"></div><div class="a" style="left:166.5px;top:972.5px;width:36.30000000000001px;height:7.5px;background:#c0c0c0;"></div><span class="t" style="left:166.50px;top:950.42px;font-size:15.8px;line-height:15.8px;color:#2b2b2b;transform:scaleX(0.9165);">Verify</span><div class="a" style="left:217.8px;top:949px;width:85.0px;height:23.5px;background:#e0e7ef;"></div><div class="a" style="left:217.8px;top:972.5px;width:85.0px;height:7.5px;background:#c0c0c0;"></div><span class="t" style="left:216.89px;top:950.42px;font-size:15.8px;line-height:15.8px;color:#2b2b2b;transform:scaleX(0.9088);">Data Preview</span><div class="a" style="left:0px;top:980px;width:1918px;height:17px;background:#f0f0f0;"></div><div class="a" style="left:0px;top:980px;width:1918px;height:1px;background:#dadada;"></div>
</body></html>
